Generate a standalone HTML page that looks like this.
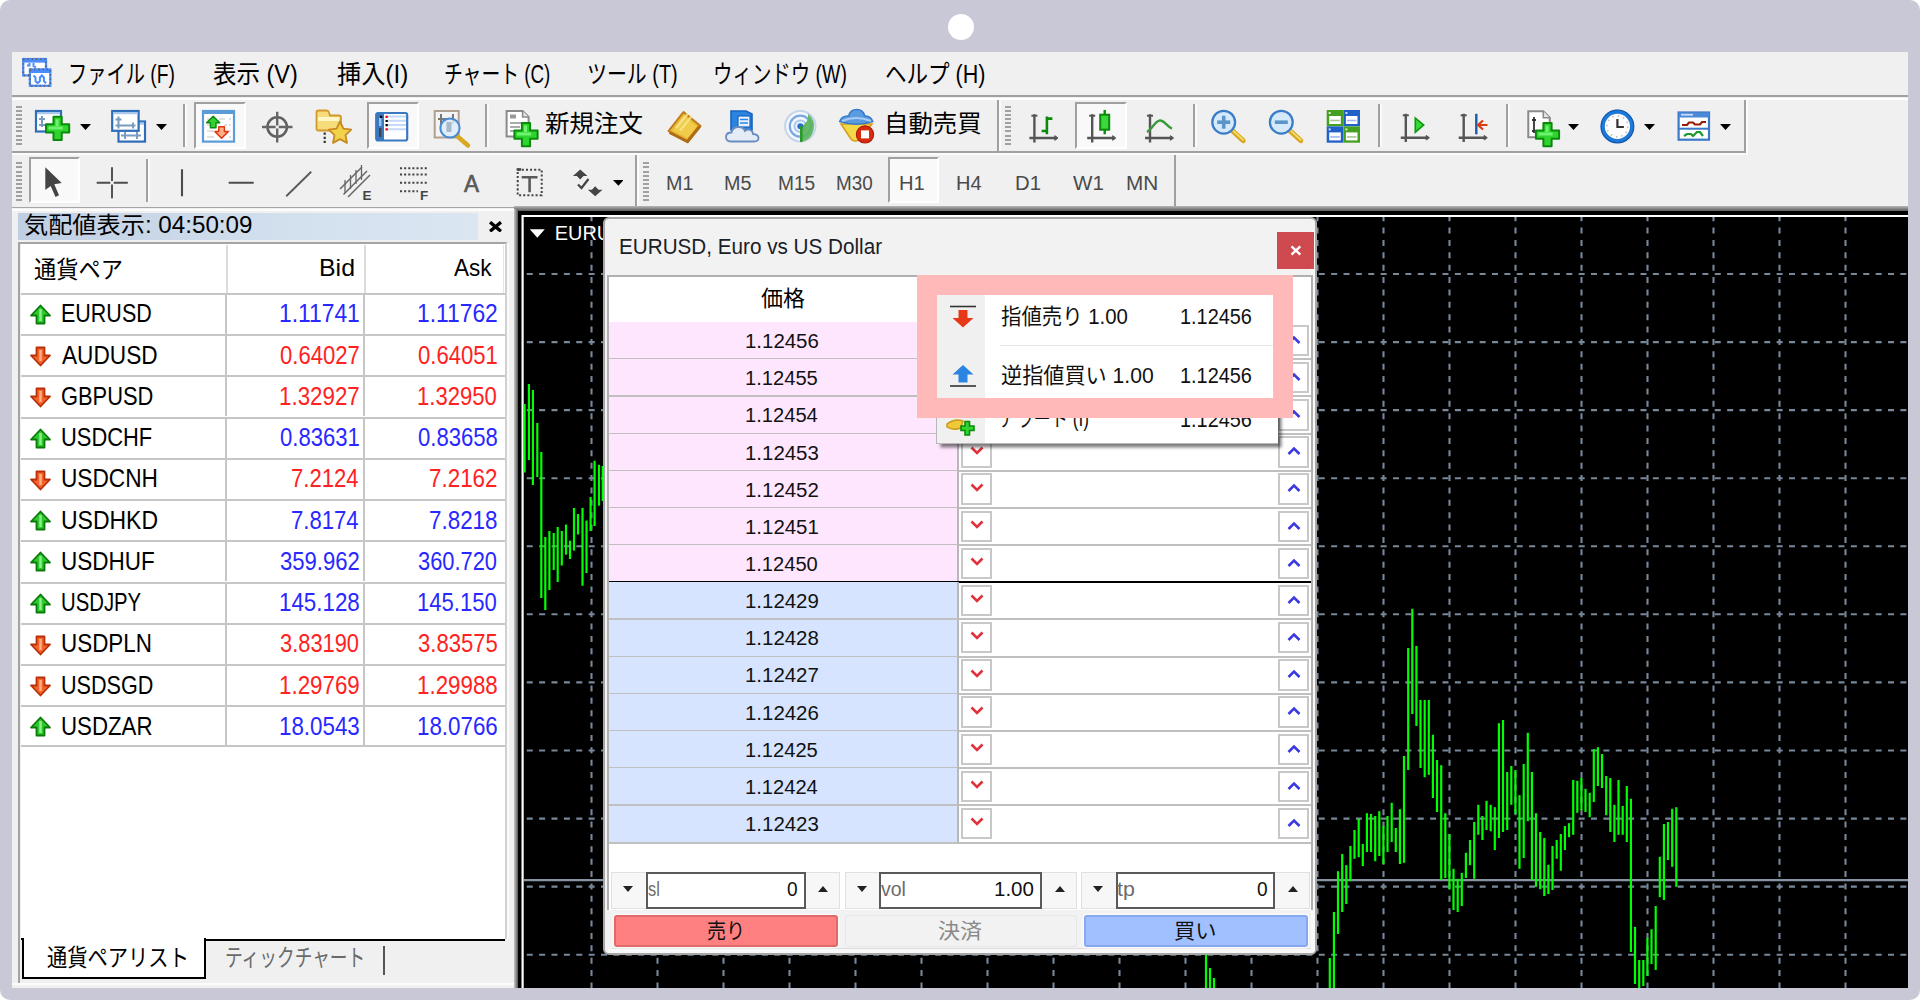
<!DOCTYPE html>
<html lang="ja"><head><meta charset="utf-8"><title>MT4</title>
<style>
html,body{margin:0;padding:0;background:#fff;}
body{width:1920px;height:1000px;position:relative;overflow:hidden;font-family:"Liberation Sans","Noto Sans CJK JP",sans-serif;}
.b{position:absolute;box-sizing:border-box;display:block;}
.t{position:absolute;white-space:nowrap;display:inline-block;}
</style></head><body>
<div class="b " style="left:0.0px;top:0.0px;width:1920.0px;height:1000.0px;background:#c8c8d6;border-radius:10px;"></div>
<div class="b " style="left:947.9px;top:13.8px;width:26.3px;height:26.3px;background:#fff;border-radius:50%;"></div>
<div class="b " style="left:12.0px;top:52.0px;width:1896.0px;height:936.0px;background:#f0f0f0;"></div>
<svg class="b" style="left:20.0px;top:56.0px;" width="34" height="34" viewBox="0 0 34 34">
<rect x="3.200" y="3" width="22.800" height="16.400" fill="#fff" stroke="#4a8cff" stroke-width="2.200"/>
<rect x="3.200" y="3" width="22.800" height="3.600" fill="#4a8cff"/>
<path d="M7 9.500 h2.500 v-2.500 M13.500 7 v3 l2.500 1.500" fill="none" stroke="#4a8cff" stroke-width="2"/>
<rect x="9.900" y="13.400" width="20.400" height="16.400" fill="#fff" stroke="#4a8cff" stroke-width="2.200"/>
<rect x="9.900" y="13.400" width="20.400" height="3.600" fill="#4a8cff"/>
<path d="M13.500 19.500 l2 2 v3.500 l2.200 2.200 l2.200 -2.200 v-3.500 l2 -2 l2 2 v3.500 l2.200 2.200" fill="none" stroke="#4a8cff" stroke-width="2"/>
<path d="M3.200 3 h22.800 v10 M3.200 3 v16.400 h6 M9.900 13.400 h20.400 v16.400 h-20.400 Z" fill="none" stroke="#5a6068" stroke-width="2.200" stroke-dasharray="1.400 2.800" opacity=".8"/>
</svg>
<span class="t" id="t1" style="left:67.72px;top:57.9px;font-size:25.30px;line-height:33px;color:#000;transform-origin:0 50%;transform:scaleX(0.7605);">ファイル (F)</span>
<span class="t" id="t2" style="left:213.00px;top:57.9px;font-size:25.30px;line-height:33px;color:#000;transform-origin:0 50%;transform:scaleX(0.9286);">表示 (V)</span>
<span class="t" id="t3" style="left:337.00px;top:57.9px;font-size:25.30px;line-height:33px;color:#000;transform-origin:0 50%;transform:scaleX(0.9583);">挿入(I)</span>
<span class="t" id="t4" style="left:443.51px;top:57.9px;font-size:25.30px;line-height:33px;color:#000;transform-origin:0 50%;transform:scaleX(0.7433);">チャート (C)</span>
<span class="t" id="t5" style="left:587.43px;top:57.9px;font-size:25.30px;line-height:33px;color:#000;transform-origin:0 50%;transform:scaleX(0.7872);">ツール (T)</span>
<span class="t" id="t6" style="left:713.19px;top:57.9px;font-size:25.30px;line-height:33px;color:#000;transform-origin:0 50%;transform:scaleX(0.7685);">ウィンドウ (W)</span>
<span class="t" id="t7" style="left:885.15px;top:57.9px;font-size:25.30px;line-height:33px;color:#000;transform-origin:0 50%;transform:scaleX(0.8511);">ヘルプ (H)</span>
<div class="b " style="left:12.0px;top:95.0px;width:1896.0px;height:2.0px;background:#a0a0a0;"></div>
<div class="b " style="left:12.0px;top:97.5px;width:1896.0px;height:2.0px;background:#fff;"></div>
<div class="b " style="left:12.0px;top:150.5px;width:1733.0px;height:2.0px;background:#a0a0a0;"></div>
<div class="b " style="left:12.0px;top:153.0px;width:1733.0px;height:2.0px;background:#fbfbfb;"></div>
<div class="b " style="left:996.5px;top:99.5px;width:2.0px;height:52.5px;background:#a0a0a0;"></div>
<div class="b " style="left:998.5px;top:99.5px;width:2.0px;height:51.0px;background:#fbfbfb;"></div>
<div class="b " style="left:1743.5px;top:99.5px;width:2.0px;height:53.0px;background:#a0a0a0;"></div>
<div class="b " style="left:1745.5px;top:99.5px;width:2.0px;height:55.5px;background:#fbfbfb;"></div>
<div class="b " style="left:16.2px;top:105.6px;width:6.2px;height:2.0px;background:#a0a0a0;"></div>
<div class="b " style="left:16.2px;top:109.7px;width:6.2px;height:2.0px;background:#a0a0a0;"></div>
<div class="b " style="left:16.2px;top:113.8px;width:6.2px;height:2.0px;background:#a0a0a0;"></div>
<div class="b " style="left:16.2px;top:118.0px;width:6.2px;height:2.0px;background:#a0a0a0;"></div>
<div class="b " style="left:16.2px;top:122.1px;width:6.2px;height:2.0px;background:#a0a0a0;"></div>
<div class="b " style="left:16.2px;top:126.2px;width:6.2px;height:2.0px;background:#a0a0a0;"></div>
<div class="b " style="left:16.2px;top:130.3px;width:6.2px;height:2.0px;background:#a0a0a0;"></div>
<div class="b " style="left:16.2px;top:134.5px;width:6.2px;height:2.0px;background:#a0a0a0;"></div>
<div class="b " style="left:16.2px;top:138.6px;width:6.2px;height:2.0px;background:#a0a0a0;"></div>
<div class="b " style="left:16.2px;top:142.7px;width:6.2px;height:2.0px;background:#a0a0a0;"></div>
<div class="b " style="left:1004.8px;top:105.6px;width:6.2px;height:2.0px;background:#a0a0a0;"></div>
<div class="b " style="left:1004.8px;top:109.7px;width:6.2px;height:2.0px;background:#a0a0a0;"></div>
<div class="b " style="left:1004.8px;top:113.8px;width:6.2px;height:2.0px;background:#a0a0a0;"></div>
<div class="b " style="left:1004.8px;top:118.0px;width:6.2px;height:2.0px;background:#a0a0a0;"></div>
<div class="b " style="left:1004.8px;top:122.1px;width:6.2px;height:2.0px;background:#a0a0a0;"></div>
<div class="b " style="left:1004.8px;top:126.2px;width:6.2px;height:2.0px;background:#a0a0a0;"></div>
<div class="b " style="left:1004.8px;top:130.3px;width:6.2px;height:2.0px;background:#a0a0a0;"></div>
<div class="b " style="left:1004.8px;top:134.5px;width:6.2px;height:2.0px;background:#a0a0a0;"></div>
<div class="b " style="left:1004.8px;top:138.6px;width:6.2px;height:2.0px;background:#a0a0a0;"></div>
<div class="b " style="left:1004.8px;top:142.7px;width:6.2px;height:2.0px;background:#a0a0a0;"></div>
<div class="b " style="left:12.0px;top:206.5px;width:1896.0px;height:1.8px;background:linear-gradient(180deg,#b4b4b4,#969696);"></div>
<div class="b " style="left:634.7px;top:155.0px;width:2.0px;height:52.0px;background:#a0a0a0;"></div>
<div class="b " style="left:636.7px;top:155.0px;width:2.0px;height:51.0px;background:#fbfbfb;"></div>
<div class="b " style="left:1173.5px;top:155.0px;width:2.0px;height:52.0px;background:#a0a0a0;"></div>
<div class="b " style="left:16.2px;top:162.3px;width:6.2px;height:2.0px;background:#a0a0a0;"></div>
<div class="b " style="left:16.2px;top:166.4px;width:6.2px;height:2.0px;background:#a0a0a0;"></div>
<div class="b " style="left:16.2px;top:170.6px;width:6.2px;height:2.0px;background:#a0a0a0;"></div>
<div class="b " style="left:16.2px;top:174.7px;width:6.2px;height:2.0px;background:#a0a0a0;"></div>
<div class="b " style="left:16.2px;top:178.8px;width:6.2px;height:2.0px;background:#a0a0a0;"></div>
<div class="b " style="left:16.2px;top:182.9px;width:6.2px;height:2.0px;background:#a0a0a0;"></div>
<div class="b " style="left:16.2px;top:187.1px;width:6.2px;height:2.0px;background:#a0a0a0;"></div>
<div class="b " style="left:16.2px;top:191.2px;width:6.2px;height:2.0px;background:#a0a0a0;"></div>
<div class="b " style="left:16.2px;top:195.3px;width:6.2px;height:2.0px;background:#a0a0a0;"></div>
<div class="b " style="left:16.2px;top:199.4px;width:6.2px;height:2.0px;background:#a0a0a0;"></div>
<div class="b " style="left:642.5px;top:162.3px;width:6.2px;height:2.0px;background:#a0a0a0;"></div>
<div class="b " style="left:642.5px;top:166.4px;width:6.2px;height:2.0px;background:#a0a0a0;"></div>
<div class="b " style="left:642.5px;top:170.6px;width:6.2px;height:2.0px;background:#a0a0a0;"></div>
<div class="b " style="left:642.5px;top:174.7px;width:6.2px;height:2.0px;background:#a0a0a0;"></div>
<div class="b " style="left:642.5px;top:178.8px;width:6.2px;height:2.0px;background:#a0a0a0;"></div>
<div class="b " style="left:642.5px;top:182.9px;width:6.2px;height:2.0px;background:#a0a0a0;"></div>
<div class="b " style="left:642.5px;top:187.1px;width:6.2px;height:2.0px;background:#a0a0a0;"></div>
<div class="b " style="left:642.5px;top:191.2px;width:6.2px;height:2.0px;background:#a0a0a0;"></div>
<div class="b " style="left:642.5px;top:195.3px;width:6.2px;height:2.0px;background:#a0a0a0;"></div>
<div class="b " style="left:642.5px;top:199.4px;width:6.2px;height:2.0px;background:#a0a0a0;"></div>
<div class="b " style="left:183.0px;top:104.0px;width:2.0px;height:42.5px;background:#a0a0a0;"></div>
<div class="b " style="left:185.0px;top:104.0px;width:2.0px;height:42.5px;background:#fafafa;"></div>
<div class="b " style="left:485.0px;top:104.0px;width:2.0px;height:42.5px;background:#a0a0a0;"></div>
<div class="b " style="left:487.0px;top:104.0px;width:2.0px;height:42.5px;background:#fafafa;"></div>
<div class="b " style="left:1192.5px;top:104.0px;width:2.0px;height:42.5px;background:#a0a0a0;"></div>
<div class="b " style="left:1194.5px;top:104.0px;width:2.0px;height:42.5px;background:#fafafa;"></div>
<div class="b " style="left:1378.0px;top:104.0px;width:2.0px;height:42.5px;background:#a0a0a0;"></div>
<div class="b " style="left:1380.0px;top:104.0px;width:2.0px;height:42.5px;background:#fafafa;"></div>
<div class="b " style="left:1506.0px;top:104.0px;width:2.0px;height:42.5px;background:#a0a0a0;"></div>
<div class="b " style="left:1508.0px;top:104.0px;width:2.0px;height:42.5px;background:#fafafa;"></div>
<div class="b " style="left:146.0px;top:159.0px;width:2.0px;height:43.0px;background:#a0a0a0;"></div>
<div class="b " style="left:148.0px;top:159.0px;width:2.0px;height:43.0px;background:#fafafa;"></div>
<div class="b " style="left:193.8px;top:101.5px;width:52.7px;height:47.0px;background:#f9f9f9;border-top:2px solid #a0a0a0;border-left:2px solid #a0a0a0;border-right:2px solid #fff;border-bottom:2px solid #fff;"></div>
<div class="b " style="left:367.0px;top:101.5px;width:52.0px;height:47.0px;background:#f9f9f9;border-top:2px solid #a0a0a0;border-left:2px solid #a0a0a0;border-right:2px solid #fff;border-bottom:2px solid #fff;"></div>
<div class="b " style="left:1075.0px;top:101.5px;width:51.5px;height:47.0px;background:#f9f9f9;border-top:2px solid #a0a0a0;border-left:2px solid #a0a0a0;border-right:2px solid #fff;border-bottom:2px solid #fff;"></div>
<div class="b " style="left:28.7px;top:157.3px;width:51.6px;height:45.5px;background:#f9f9f9;border-top:2px solid #a0a0a0;border-left:2px solid #a0a0a0;border-right:2px solid #fff;border-bottom:2px solid #fff;"></div>
<div class="b " style="left:887.5px;top:157.3px;width:51.5px;height:45.5px;background:#f9f9f9;border-top:2px solid #a0a0a0;border-left:2px solid #a0a0a0;border-right:2px solid #fff;border-bottom:2px solid #fff;"></div>
<svg class="b" style="left:79.8px;top:124.2px;" width="11" height="6" viewBox="0 0 11 6"><path d="M0 0 H11 L5.5 6 Z" fill="#000"/></svg>
<svg class="b" style="left:156.2px;top:124.2px;" width="11" height="6" viewBox="0 0 11 6"><path d="M0 0 H11 L5.5 6 Z" fill="#000"/></svg>
<svg class="b" style="left:1567.6px;top:124.2px;" width="11" height="6" viewBox="0 0 11 6"><path d="M0 0 H11 L5.5 6 Z" fill="#000"/></svg>
<svg class="b" style="left:1643.8px;top:124.2px;" width="11" height="6" viewBox="0 0 11 6"><path d="M0 0 H11 L5.5 6 Z" fill="#000"/></svg>
<svg class="b" style="left:1720.3px;top:124.2px;" width="11" height="6" viewBox="0 0 11 6"><path d="M0 0 H11 L5.5 6 Z" fill="#000"/></svg>
<svg class="b" style="left:612.5px;top:180.3px;" width="10.8" height="5.8" viewBox="0 0 10.8 5.8"><path d="M0 0 H10.8 L5.4 5.8 Z" fill="#000"/></svg>
<span class="t" id="t8" style="left:545.00px;top:107.5px;font-size:24.00px;line-height:31px;color:#000;transform-origin:0 50%;transform:scaleX(1.0208);">新規注文</span>
<span class="t" id="t9" style="left:884.15px;top:107.5px;font-size:24.00px;line-height:31px;color:#000;transform-origin:0 50%;transform:scaleX(1.0163);">自動売買</span>
<span class="t" id="t10" style="left:666.39px;top:170.5px;font-size:19.50px;line-height:25px;color:#4a4a4a;transform-origin:0 50%;transform:scaleX(1.0141);">M1</span>
<span class="t" id="t11" style="left:723.99px;top:170.5px;font-size:19.50px;line-height:25px;color:#4a4a4a;transform-origin:0 50%;transform:scaleX(1.0136);">M5</span>
<span class="t" id="t12" style="left:778.02px;top:170.5px;font-size:19.50px;line-height:25px;color:#4a4a4a;transform-origin:0 50%;transform:scaleX(0.9814);">M15</span>
<span class="t" id="t13" style="left:835.63px;top:170.5px;font-size:19.50px;line-height:25px;color:#4a4a4a;transform-origin:0 50%;transform:scaleX(0.9680);">M30</span>
<span class="t" id="t14" style="left:899.36px;top:170.5px;font-size:19.50px;line-height:25px;color:#4a4a4a;transform-origin:0 50%;transform:scaleX(1.0354);">H1</span>
<span class="t" id="t15" style="left:955.67px;top:170.5px;font-size:19.50px;line-height:25px;color:#4a4a4a;transform-origin:0 50%;transform:scaleX(1.0257);">H4</span>
<span class="t" id="t16" style="left:1014.96px;top:170.5px;font-size:19.50px;line-height:25px;color:#4a4a4a;transform-origin:0 50%;transform:scaleX(1.0398);">D1</span>
<span class="t" id="t17" style="left:1072.50px;top:170.5px;font-size:19.50px;line-height:25px;color:#4a4a4a;transform-origin:0 50%;transform:scaleX(1.0562);">W1</span>
<span class="t" id="t18" style="left:1126.44px;top:170.5px;font-size:19.50px;line-height:25px;color:#4a4a4a;transform-origin:0 50%;transform:scaleX(1.0622);">MN</span>
<svg class="b" style="left:0;top:0" width="1920" height="212" viewBox="0 0 1920 212"><rect x="36" y="111" width="25" height="20.5" fill="#fff" stroke="#2e6db8" stroke-width="2.2"/><rect x="37" y="112" width="23" height="2.2" fill="#a9c6ec"/><path d="M42 116 v11 M39 119 h6 M39 125 h6" stroke="#7a9cc0" stroke-width="2" fill="none"/><path d="M53.5 116.8 h8.2 v7.5 h7.5 v8.2 h-7.5 v7.5 h-8.2 v-7.5 h-7.5 v-8.2 h7.5 Z" fill="#2fd42f" stroke="#0a8a0a" stroke-width="2" stroke-linejoin="round"/><path d="M57.1 119.3 v6.6 M48.5 127.9 h14.2" stroke="#7dfa7d" stroke-width="3" fill="none" opacity=".8"/><rect x="118.5" y="121.5" width="26.5" height="20.1" fill="#fff" stroke="#2e6db8" stroke-width="2.2"/><rect x="119.5" y="122.5" width="24.5" height="2.2" fill="#a9c6ec"/><path d="M121 135.5 h20 M125 132 v7 M137 132 v7" stroke="#7a9cc0" stroke-width="2" fill="none"/><rect x="112.2" y="111" width="26.4" height="19.8" fill="#fff" stroke="#2e6db8" stroke-width="2.2"/><rect x="113.2" y="112" width="24.4" height="2.2" fill="#a9c6ec"/><path d="M118.5 116.5 v12 M115.5 119.5 h6 M115.5 125.5 h20 M133 122.5 v6" stroke="#7a9cc0" stroke-width="2" fill="none"/><rect x="203" y="111" width="31" height="30.6" fill="#fff" stroke="#5b9bd8" stroke-width="2.2"/><rect x="203" y="111" width="31" height="3" fill="#5b9bd8"/><path d="M207 119h8M219 119h6M229 119h2M207 125h3M224 125h3M229 125h2M207 131h7M229 131h2M207 137h7M229 137h2" stroke="#d8d8d8" stroke-width="1.6"/><path d="M213.2 116.200 L219.800 122.800 H216 V127.800 H210.400 V122.800 H206.600 Z" fill="#35d035" stroke="#0a8a0a" stroke-width="1.400" stroke-linejoin="round"/><path d="M221.600 138.200 L228.200 131.600 H224.400 V126.800 H218.800 V131.600 H215 Z" fill="#ffb088" stroke="#e03810" stroke-width="1.500" stroke-linejoin="round"/><circle cx="277.2" cy="127" r="9.700" fill="none" stroke="#606060" stroke-width="2.600"/><path d="M262 127 h13.600 M278.800 127 h13.700 M277.2 111.8 v13.600 M277.2 128.600 v13.800" stroke="#666" stroke-width="2.4"/><path d="M316.5 112.5 q0 -2 2 -2 h8 q2 0 2.5 2 l1 3 h9 q2 0 2 2 v11 q0 2 -2 2 h-20.5 q-2 0 -2 -2 Z" fill="#f6dc7a" stroke="#d29a2a" stroke-width="1.8"/><rect x="318" y="117" width="21" height="4" fill="#fff7c8"/><path d="M340 121.5 l3.4 7.2 7.8 1 -5.7 5.4 1.5 7.8 -7 -3.8 -7 3.8 1.5 -7.8 -5.7 -5.4 7.8 -1 Z" fill="#f2d24a" stroke="#c68a1e" stroke-width="1.8" stroke-linejoin="round"/><path d="M324.7 132.5 v2.2 M324.7 136.7 v2.2 M324.7 140.7 v2.2" stroke="#333" stroke-width="2.2"/><rect x="376.2" y="113" width="31" height="27.5" rx="2" fill="#fff" stroke="#3a78c0" stroke-width="2.2"/><rect x="376" y="113" width="8" height="27.5" fill="#3a78c0"/><rect x="379" y="128" width="2.4" height="9" fill="#444"/><rect x="379" y="116" width="2.4" height="10" fill="#9cc4f0"/><path d="M385 116.5h21M385 120.8h21M385 125h21M385 129.2h21" stroke="#c4d8f8" stroke-width="2"/><path d="M379.6 116.8h2.6M385.6 121h2.2M385.6 125.2h2.2" stroke="#000" stroke-width="2.2"/><path d="M385.6 116.8h2.2M385.6 129.4h2.2" stroke="#f00" stroke-width="2.2"/><rect x="434.7" y="111" width="24" height="26.5" fill="#f4f4f4" stroke="#b0a090" stroke-width="2"/><path d="M441 114 v14 M438 119 h10 M453 114 v10" stroke="#777" stroke-width="2" fill="none"/><path d="M457 136 l11 9.5" stroke="#d8a820" stroke-width="4.4" stroke-linecap="round"/><circle cx="450" cy="128" r="9.6" fill="#dcecfa" fill-opacity=".85" stroke="#4a8ad0" stroke-width="2"/><rect x="446.5" y="122" width="5" height="10" fill="#9ab" opacity=".8"/><path d="M506.6 111 h16 l6 6 v19.5 h-22 Z" fill="#fff" stroke="#8a8a8a" stroke-width="2"/><path d="M522.6 111 v6 h6" fill="#e8e8e8" stroke="#8a8a8a" stroke-width="1.6"/><rect x="510" y="114.5" width="6" height="4" fill="#999"/><path d="M510 123h13M510 127h10M510 131h6" stroke="#aaa" stroke-width="2"/><path d="M521.9 123 h8.2 v7.5 h7.5 v8.2 h-7.5 v7.5 h-8.2 v-7.5 h-7.5 v-8.2 h7.5 Z" fill="#2fd42f" stroke="#0a8a0a" stroke-width="2" stroke-linejoin="round"/><path d="M525.5 125.5 v6.6 M516.9 134.1 h14.2" stroke="#7dfa7d" stroke-width="3" fill="none" opacity=".8"/><path d="M668.5 131 l15 -19 17 14 -13 16 Z" fill="#e8b838" stroke="#c07a18" stroke-width="2" stroke-linejoin="round"/><path d="M683.500 115.500 l13.500 11 -9.500 11.500 -14.500 -7.500 Z" fill="#f0cc48"/><path d="M676 128 l12 -14.500 M680 130.500 l12 -14.500" stroke="#f8e890" stroke-width="2.400" opacity=".8"/><path d="M669.5 132.5 l18 9 12 -15" fill="none" stroke="#b06c14" stroke-width="3"/><path d="M731 111 h15 l6 3 v16 h-21 Z" fill="#2a84e0" stroke="#1a64c0" stroke-width="1.6"/><rect x="738" y="116" width="12" height="11" fill="#e8f2ff" stroke="#1a64c0" stroke-width="1.2"/><path d="M740 119.5h8M740 123h8" stroke="#2a84e0" stroke-width="1.6"/><path d="M731 141.5 q-5 0 -5 -4.5 q0 -4.500 5.500 -4.500 q1 -5.500 7 -5.500 q5 0 6.500 4 q2 -2 5 -1 q3 1 3 4 q5.500 0.500 5.500 4 q0 3.500 -4.500 3.500 Z" fill="#e4ecf6" stroke="#6a8cc0" stroke-width="1.8"/><circle cx="800.3" cy="126.2" r="15.2" fill="#f4f8fc" stroke="#c4d4ea" stroke-width="2"/><circle cx="800.3" cy="126.2" r="10.5" fill="none" stroke="#7aa8e0" stroke-width="2.2"/><circle cx="800.3" cy="126.2" r="5.800" fill="none" stroke="#a8c8f0" stroke-width="2"/><path d="M802 141.8 v-16 a12 12 0 0 0 6 -12 a16 16 0 0 1 -6 28 Z" fill="#58b458" opacity=".9"/><circle cx="800.3" cy="126.2" r="3" fill="#2a6cd0"/><rect x="800" y="126" width="2.6" height="16" fill="#2a9a2a"/><path d="M841 124 l10 15 q3 3.500 8 1 l13 -16 Z" fill="#f4d848" stroke="#d4a020" stroke-width="1.6"/><path d="M839.700 121.500 q2 -6 9 -5.500 q1.500 -6.500 8 -6.500 q6.500 0 8 6.500 q6 -0.500 8 5.500 q-16 5.500 -33 0 Z" fill="#5a9ce0" stroke="#3a78c8" stroke-width="1.6"/><path d="M842 121 q14 -6 29 0" stroke="#a8ccf4" stroke-width="2" fill="none"/><circle cx="865" cy="134.4" r="8.6" fill="#d82c10" stroke="#b01c08" stroke-width="1.2"/><rect x="861" y="130.400" width="8" height="8" fill="#fff"/><path d="M1034.4 114.2 V142.4 M1029.4 138 H1056.8" stroke="#555" stroke-width="2.4" fill="none"/><path d="M1031.4 115.7 h6" stroke="#555" stroke-width="2" fill="none"/><path d="M1054.8 135.7 l3.200 2.300 -3.200 2.300 Z" stroke="#555" stroke-width="1" fill="#555"/><path d="M1046.9 116.5 V134.3 M1046.9 118.6 h5.5 M1041.6 131 h5.3" stroke="#0a8a0a" stroke-width="2.6" fill="none"/><path d="M1092.2 114.2 V142.4 M1087.2 138 H1114.6" stroke="#555" stroke-width="2.4" fill="none"/><path d="M1089.2 115.7 h6" stroke="#555" stroke-width="2" fill="none"/><path d="M1112.6 135.7 l3.200 2.300 -3.200 2.300 Z" stroke="#555" stroke-width="1" fill="#555"/><path d="M1104.7 109.900 V134.3" stroke="#0a8a0a" stroke-width="2.4"/><rect x="1100.2" y="114.700" width="9" height="15" fill="#3ad83a" stroke="#0a8a0a" stroke-width="2"/><path d="M1150 114.2 V142.4 M1145 138 H1172.4" stroke="#555" stroke-width="2.4" fill="none"/><path d="M1147 115.7 h6" stroke="#555" stroke-width="2" fill="none"/><path d="M1170.4 135.7 l3.200 2.300 -3.200 2.300 Z" stroke="#555" stroke-width="1" fill="#555"/><path d="M1146.9 131.8 C1152 130 1155 120.5 1160 120.5 S1167 127 1172 128.600" stroke="#3a9a3a" stroke-width="2.4" fill="none"/><path d="M1232.2 130.7 l11 10" stroke="#d8a820" stroke-width="5" stroke-linecap="round"/><path d="M1232.2 129.9 l11 10" stroke="#f8e070" stroke-width="1.6" stroke-linecap="round"/><circle cx="1223.7" cy="122.2" r="11.4" fill="#d4eafa" stroke="#3a7cc8" stroke-width="2.2"/><path d="M1217.2 122.2 h13" stroke="#5a94c8" stroke-width="3.6"/><path d="M1223.7 115.7 v13" stroke="#5a94c8" stroke-width="3.6"/><path d="M1289.8 130.7 l11 10" stroke="#d8a820" stroke-width="5" stroke-linecap="round"/><path d="M1289.8 129.9 l11 10" stroke="#f8e070" stroke-width="1.6" stroke-linecap="round"/><circle cx="1281.3" cy="122.2" r="11.4" fill="#d4eafa" stroke="#3a7cc8" stroke-width="2.2"/><path d="M1274.8 122.2 h13" stroke="#5a94c8" stroke-width="3.6"/><rect x="1326.7" y="110" width="16.6" height="16.3" fill="#46a020"/><rect x="1329.2" y="116" width="11.6" height="8" fill="#fff"/><path d="M1330.2 120.5 h9.6" stroke="#a8c890" stroke-width="1.6"/><rect x="1328.7" y="112" width="2" height="2" fill="#fff" opacity=".8"/><rect x="1343.4" y="110" width="16.6" height="16.3" fill="#2060c8"/><rect x="1345.9" y="116" width="11.6" height="8" fill="#fff"/><path d="M1346.9 120.5 h9.6" stroke="#a0b8f0" stroke-width="1.6"/><rect x="1345.4" y="112" width="2" height="2" fill="#fff" opacity=".8"/><rect x="1326.7" y="126.4" width="16.6" height="16.3" fill="#2060c8"/><rect x="1329.2" y="132.4" width="11.6" height="8" fill="#fff"/><path d="M1330.2 136.9 h9.6" stroke="#a0b8f0" stroke-width="1.6"/><rect x="1328.7" y="128.4" width="2" height="2" fill="#fff" opacity=".8"/><rect x="1343.4" y="126.4" width="16.6" height="16.3" fill="#46a020"/><rect x="1345.9" y="132.4" width="11.6" height="8" fill="#fff"/><path d="M1346.9 136.9 h9.6" stroke="#a8c890" stroke-width="1.6"/><rect x="1345.4" y="128.4" width="2" height="2" fill="#fff" opacity=".8"/><path d="M1405.8 113.8 V142.1 M1400.8 137.7 H1428.2" stroke="#555" stroke-width="2.4" fill="none"/><path d="M1402.8 115.3 h6" stroke="#555" stroke-width="2" fill="none"/><path d="M1426.2 135.4 l3.200 2.300 -3.200 2.300 Z" stroke="#555" stroke-width="1" fill="#555"/><path d="M1415.3 118 l8.400 7.100 -8.400 7.100 Z" fill="#3ad83a" stroke="#0a9a0a" stroke-width="1.6"/><path d="M1463.7 113.8 V142.1 M1458.7 137.7 H1486.1" stroke="#555" stroke-width="2.4" fill="none"/><path d="M1460.7 115.3 h6" stroke="#555" stroke-width="2" fill="none"/><path d="M1484.1 135.4 l3.200 2.300 -3.200 2.300 Z" stroke="#555" stroke-width="1" fill="#555"/><path d="M1476.3 113.8 V134.3" stroke="#1a5ca8" stroke-width="2.4"/><path d="M1487.5 125 h-9 M1483 120.500 l-5 4.500 5 4.500" stroke="#d83c10" stroke-width="2.200" fill="none"/><path d="M1528.3 111.2 h15 l6.500 6.500 v19.500 h-21.500 Z" fill="#fff" stroke="#8a8a8a" stroke-width="2"/><path d="M1543.3 111.2 v6.500 h6.500" fill="#e8e8e8" stroke="#8a8a8a" stroke-width="1.6"/><path d="M1534 117 v16 M1532 120 h4 M1532 131 h4" stroke="#333" stroke-width="1.800"/><path d="M1543.4 123 h8.2 v7.5 h7.5 v8.2 h-7.5 v7.5 h-8.2 v-7.5 h-7.5 v-8.2 h7.5 Z" fill="#2fd42f" stroke="#0a8a0a" stroke-width="2" stroke-linejoin="round"/><path d="M1547 125.5 v6.6 M1538.4 134.1 h14.2" stroke="#7dfa7d" stroke-width="3" fill="none" opacity=".8"/><circle cx="1617.4" cy="126.4" r="14.6" fill="#fdfdfd" stroke="#1e78d8" stroke-width="4"/><circle cx="1617.4" cy="126.4" r="16.400" fill="none" stroke="#1458b0" stroke-width="1.2"/><path d="M1617.4 119 v8 h6.500" stroke="#333" stroke-width="2.200" fill="none"/><circle cx="1617.4" cy="126.4" r="10.500" fill="none" stroke="#bbb" stroke-width="1.600" stroke-dasharray="1.400 4.100"/><rect x="1678.6" y="112.500" width="30.400" height="27.200" fill="#fff" stroke="#3a78c8" stroke-width="2.200"/><rect x="1678.6" y="112.500" width="30.400" height="5" fill="#4a88d8"/><rect x="1681" y="113.800" width="12" height="1.800" fill="#c8dcf8"/><path d="M1678.6 128.700 h30.400" stroke="#3a78c8" stroke-width="2"/><path d="M1682 125 h5 l2 -2.500 h4 l2 2 h5 l2 -2.500 h4" stroke="#9a1c08" stroke-width="2.200" fill="none"/><path d="M1684 136 l3 -2 h4 l2 2 4 -4 h3 l3 4" stroke="#1a9a2a" stroke-width="2.200" fill="none"/><path d="M45.3 167.3 V190 L50.700 186 L55.500 197 L59 195.300 L54.300 184.200 L61.700 183 Z" fill="#444"/><path d="M96.7 182.800 H110.300 M113.700 182.800 H127.800 M112 167.300 V181.100 M112 184.500 V198.300" stroke="#4c4c4c" stroke-width="1.900"/><path d="M182 169.200 V196.200 M228.700 182.800 H253.700" stroke="#4c4c4c" stroke-width="2.100"/><path d="M286.200 196.200 L311.200 171.700" stroke="#5a5a5a" stroke-width="1.900"/><path d="M340 189 L362 167 M343.500 194.500 L367 171 M348 197 L370 175" stroke="#666" stroke-width="1.500"/><path d="M345 180 v13 M350.500 175 v14 M356 170 v14 M361.500 165 v15" stroke="#666" stroke-width="1.300"/><text x="362.600" y="200.300" font-family="Liberation Sans,sans-serif" font-weight="bold" font-size="13.500" fill="#444">E</text><path d="M400 168.2 H427" stroke="#444" stroke-width="2" stroke-dasharray="2.060 2.060"/><path d="M400 174.5 H427" stroke="#444" stroke-width="2" stroke-dasharray="2.060 2.060"/><path d="M400 182.8 H427" stroke="#444" stroke-width="2" stroke-dasharray="2.060 2.060"/><path d="M400 191.2 H418" stroke="#444" stroke-width="2" stroke-dasharray="2.060 2.060"/><text x="420" y="200.300" font-family="Liberation Sans,sans-serif" font-weight="bold" font-size="13.500" fill="#444">F</text><text x="463.900" y="191.800" font-family="Liberation Sans,sans-serif" font-size="24.200" fill="#5a5a5a" stroke="#5a5a5a" stroke-width=".7" textLength="15" lengthAdjust="spacingAndGlyphs">A</text><rect x="517.700" y="169.700" width="24" height="25.500" fill="none" stroke="#444" stroke-width="2" stroke-dasharray="2.060 2.060"/><rect x="516.700" y="168.200" width="4.500" height="2.500" fill="#444"/><path d="M521.700 177.300 H537.500 M529.600 177.300 V192.200" stroke="#5a5a5a" stroke-width="2.600"/><path d="M580.200 169.500 l7.300 6.500 h-4 l-3.300 3.500 -3.300 -3.500 h-4 Z" fill="#444"/><path d="M595.200 196.200 l7.300 -6.500 h-4 l-3.300 -3.500 -3.300 3.500 h-4 Z" fill="#444"/><path d="M578 184.500 l3.500 3.500 7 -9" stroke="#444" stroke-width="2.200" fill="none"/></svg>
<div class="b " style="left:12.0px;top:208.0px;width:502.0px;height:780.0px;background:#f0f0f0;"></div>
<div class="b " style="left:12.0px;top:209.0px;width:501.5px;height:2.0px;background:#fcfcfc;"></div>
<div class="b " style="left:18.3px;top:242.2px;width:1.9px;height:740.8px;background:#a4a4a4;"></div>
<div class="b " style="left:18.0px;top:212.9px;width:460.0px;height:26.9px;background:linear-gradient(90deg,#bfcfe3 0%,#d3e0ee 60%,#dbe6f2 100%);"></div>
<span class="t" id="t19" style="left:24.40px;top:210.0px;font-size:23.00px;line-height:30px;color:#000;transform-origin:0 50%;transform:scaleX(1.0512);">気配値表示: 04:50:09</span>
<svg class="b" style="left:488.5px;top:220.8px;" width="13" height="11.5" viewBox="0 0 13 11.5"><path d="M1 1.200 L12 10.300 M12 1.200 L1 10.300" stroke="#000" stroke-width="3.400" stroke-linecap="butt"/></svg>
<div class="b " style="left:20.5px;top:242.0px;width:486.5px;height:697.0px;background:#fff;"></div>
<div class="b " style="left:18.3px;top:242.2px;width:488.7px;height:1.8px;background:#a4a4a4;"></div>
<div class="b " style="left:507.2px;top:244.0px;width:1.6px;height:695.0px;background:#fbfbfb;"></div>
<div class="b " style="left:505.0px;top:243.0px;width:2.0px;height:696.0px;background:#d0d0d0;"></div>
<div class="b " style="left:20.5px;top:292.5px;width:484.5px;height:2.0px;background:#c6c6c6;"></div>
<div class="b " style="left:226.0px;top:245.0px;width:2.0px;height:47.5px;background:#dcdcdc;"></div>
<div class="b " style="left:364.0px;top:245.0px;width:2.0px;height:47.5px;background:#dcdcdc;"></div>
<div class="b " style="left:502.5px;top:245.0px;width:1.5px;height:47.5px;background:#e4e4e4;"></div>
<span class="t" id="t20" style="left:33.90px;top:253.7px;font-size:24.00px;line-height:31px;color:#000;transform-origin:0 50%;transform:scaleX(0.9263);">通貨ペア</span>
<span class="t" id="t21" style="left:318.97px;top:251.7px;font-size:24.50px;line-height:32px;color:#000;transform-origin:0 50%;transform:scaleX(1.0157);">Bid</span>
<span class="t" id="t22" style="left:454.20px;top:251.7px;font-size:24.50px;line-height:32px;color:#000;transform-origin:0 50%;transform:scaleX(0.9185);">Ask</span>
<div class="b " style="left:20.5px;top:334.1px;width:484.5px;height:2.0px;background:#c6c6c6;"></div>
<div class="b " style="left:224.5px;top:294.8px;width:2.0px;height:39.2px;background:#c6c6c6;"></div>
<div class="b " style="left:363.0px;top:294.8px;width:2.0px;height:39.2px;background:#c6c6c6;"></div>
<span class="t" id="t23" style="left:60.59px;top:297.4px;font-size:25.20px;line-height:33px;color:#000;transform-origin:0 50%;transform:scaleX(0.8530);">EURUSD</span>
<span class="t" id="t24" style="left:278.69px;top:297.4px;font-size:25.20px;line-height:33px;color:#2828ff;transform-origin:0 50%;transform:scaleX(0.9063);">1.11741</span>
<span class="t" id="t25" style="left:417.09px;top:297.4px;font-size:25.20px;line-height:33px;color:#2828ff;transform-origin:0 50%;transform:scaleX(0.9063);">1.11762</span>
<svg class="b" style="left:29.0px;top:303.9px;" width="23" height="22" viewBox="0 0 23 22"><path d="M11.500 1.500 L21 11.500 H15.500 V19.500 H7.500 V11.500 H2 Z" fill="#2fc82f" stroke="#0a7a0a" stroke-width="1.800" stroke-linejoin="round"/><path d="M11.500 5 V17" stroke="#8af08a" stroke-width="2.500"/></svg>
<div class="b " style="left:20.5px;top:375.3px;width:484.5px;height:2.0px;background:#c6c6c6;"></div>
<div class="b " style="left:224.5px;top:336.1px;width:2.0px;height:39.2px;background:#c6c6c6;"></div>
<div class="b " style="left:363.0px;top:336.1px;width:2.0px;height:39.2px;background:#c6c6c6;"></div>
<span class="t" id="t26" style="left:62.30px;top:338.7px;font-size:25.20px;line-height:33px;color:#000;transform-origin:0 50%;transform:scaleX(0.8986);">AUDUSD</span>
<span class="t" id="t27" style="left:279.60px;top:338.7px;font-size:25.20px;line-height:33px;color:#ff2222;transform-origin:0 50%;transform:scaleX(0.8774);">0.64027</span>
<span class="t" id="t28" style="left:418.00px;top:338.7px;font-size:25.20px;line-height:33px;color:#ff2222;transform-origin:0 50%;transform:scaleX(0.8774);">0.64051</span>
<svg class="b" style="left:29.0px;top:345.2px;" width="23" height="22" viewBox="0 0 23 22"><path d="M11.500 20.500 L21 10.500 H15.500 V2.500 H7.500 V10.500 H2 Z" fill="#f4642a" stroke="#b8300a" stroke-width="1.800" stroke-linejoin="round"/><path d="M11.500 5 V16" stroke="#ffb088" stroke-width="2.500"/></svg>
<div class="b " style="left:20.5px;top:416.6px;width:484.5px;height:2.0px;background:#c6c6c6;"></div>
<div class="b " style="left:224.5px;top:377.3px;width:2.0px;height:39.2px;background:#c6c6c6;"></div>
<div class="b " style="left:363.0px;top:377.3px;width:2.0px;height:39.2px;background:#c6c6c6;"></div>
<span class="t" id="t29" style="left:61.43px;top:379.9px;font-size:25.20px;line-height:33px;color:#000;transform-origin:0 50%;transform:scaleX(0.8687);">GBPUSD</span>
<span class="t" id="t30" style="left:278.71px;top:379.9px;font-size:25.20px;line-height:33px;color:#ff2222;transform-origin:0 50%;transform:scaleX(0.8873);">1.32927</span>
<span class="t" id="t31" style="left:417.12px;top:379.9px;font-size:25.20px;line-height:33px;color:#ff2222;transform-origin:0 50%;transform:scaleX(0.8774);">1.32950</span>
<svg class="b" style="left:29.0px;top:386.4px;" width="23" height="22" viewBox="0 0 23 22"><path d="M11.500 20.500 L21 10.500 H15.500 V2.500 H7.500 V10.500 H2 Z" fill="#f4642a" stroke="#b8300a" stroke-width="1.800" stroke-linejoin="round"/><path d="M11.500 5 V16" stroke="#ffb088" stroke-width="2.500"/></svg>
<div class="b " style="left:20.5px;top:457.8px;width:484.5px;height:2.0px;background:#c6c6c6;"></div>
<div class="b " style="left:224.5px;top:418.6px;width:2.0px;height:39.2px;background:#c6c6c6;"></div>
<div class="b " style="left:363.0px;top:418.6px;width:2.0px;height:39.2px;background:#c6c6c6;"></div>
<span class="t" id="t32" style="left:61.43px;top:421.2px;font-size:25.20px;line-height:33px;color:#000;transform-origin:0 50%;transform:scaleX(0.8691);">USDCHF</span>
<span class="t" id="t33" style="left:279.60px;top:421.2px;font-size:25.20px;line-height:33px;color:#2828ff;transform-origin:0 50%;transform:scaleX(0.8774);">0.83631</span>
<span class="t" id="t34" style="left:418.00px;top:421.2px;font-size:25.20px;line-height:33px;color:#2828ff;transform-origin:0 50%;transform:scaleX(0.8774);">0.83658</span>
<svg class="b" style="left:29.0px;top:427.7px;" width="23" height="22" viewBox="0 0 23 22"><path d="M11.500 1.500 L21 11.500 H15.500 V19.500 H7.500 V11.500 H2 Z" fill="#2fc82f" stroke="#0a7a0a" stroke-width="1.800" stroke-linejoin="round"/><path d="M11.500 5 V17" stroke="#8af08a" stroke-width="2.500"/></svg>
<div class="b " style="left:20.5px;top:499.1px;width:484.5px;height:2.0px;background:#c6c6c6;"></div>
<div class="b " style="left:224.5px;top:459.8px;width:2.0px;height:39.2px;background:#c6c6c6;"></div>
<div class="b " style="left:363.0px;top:459.8px;width:2.0px;height:39.2px;background:#c6c6c6;"></div>
<span class="t" id="t35" style="left:61.40px;top:462.4px;font-size:25.20px;line-height:33px;color:#000;transform-origin:0 50%;transform:scaleX(0.9000);">USDCNH</span>
<span class="t" id="t36" style="left:290.97px;top:462.4px;font-size:25.20px;line-height:33px;color:#ff2222;transform-origin:0 50%;transform:scaleX(0.8779);">7.2124</span>
<span class="t" id="t37" style="left:429.36px;top:462.4px;font-size:25.20px;line-height:33px;color:#ff2222;transform-origin:0 50%;transform:scaleX(0.8896);">7.2162</span>
<svg class="b" style="left:29.0px;top:468.9px;" width="23" height="22" viewBox="0 0 23 22"><path d="M11.500 20.500 L21 10.500 H15.500 V2.500 H7.500 V10.500 H2 Z" fill="#f4642a" stroke="#b8300a" stroke-width="1.800" stroke-linejoin="round"/><path d="M11.500 5 V16" stroke="#ffb088" stroke-width="2.500"/></svg>
<div class="b " style="left:20.5px;top:540.3px;width:484.5px;height:2.0px;background:#c6c6c6;"></div>
<div class="b " style="left:224.5px;top:501.1px;width:2.0px;height:39.2px;background:#c6c6c6;"></div>
<div class="b " style="left:363.0px;top:501.1px;width:2.0px;height:39.2px;background:#c6c6c6;"></div>
<span class="t" id="t38" style="left:61.39px;top:503.7px;font-size:25.20px;line-height:33px;color:#000;transform-origin:0 50%;transform:scaleX(0.9120);">USDHKD</span>
<span class="t" id="t39" style="left:290.97px;top:503.7px;font-size:25.20px;line-height:33px;color:#2828ff;transform-origin:0 50%;transform:scaleX(0.8779);">7.8174</span>
<span class="t" id="t40" style="left:429.36px;top:503.7px;font-size:25.20px;line-height:33px;color:#2828ff;transform-origin:0 50%;transform:scaleX(0.8896);">7.8218</span>
<svg class="b" style="left:29.0px;top:510.2px;" width="23" height="22" viewBox="0 0 23 22"><path d="M11.500 1.500 L21 11.500 H15.500 V19.500 H7.500 V11.500 H2 Z" fill="#2fc82f" stroke="#0a7a0a" stroke-width="1.800" stroke-linejoin="round"/><path d="M11.500 5 V17" stroke="#8af08a" stroke-width="2.500"/></svg>
<div class="b " style="left:20.5px;top:581.5px;width:484.5px;height:2.0px;background:#c6c6c6;"></div>
<div class="b " style="left:224.5px;top:542.3px;width:2.0px;height:39.2px;background:#c6c6c6;"></div>
<div class="b " style="left:363.0px;top:542.3px;width:2.0px;height:39.2px;background:#c6c6c6;"></div>
<span class="t" id="t41" style="left:61.41px;top:544.9px;font-size:25.20px;line-height:33px;color:#000;transform-origin:0 50%;transform:scaleX(0.8932);">USDHUF</span>
<span class="t" id="t42" style="left:279.60px;top:544.9px;font-size:25.20px;line-height:33px;color:#2828ff;transform-origin:0 50%;transform:scaleX(0.8774);">359.962</span>
<span class="t" id="t43" style="left:418.00px;top:544.9px;font-size:25.20px;line-height:33px;color:#2828ff;transform-origin:0 50%;transform:scaleX(0.8678);">360.720</span>
<svg class="b" style="left:29.0px;top:551.4px;" width="23" height="22" viewBox="0 0 23 22"><path d="M11.500 1.500 L21 11.500 H15.500 V19.500 H7.500 V11.500 H2 Z" fill="#2fc82f" stroke="#0a7a0a" stroke-width="1.800" stroke-linejoin="round"/><path d="M11.500 5 V17" stroke="#8af08a" stroke-width="2.500"/></svg>
<div class="b " style="left:20.5px;top:622.8px;width:484.5px;height:2.0px;background:#c6c6c6;"></div>
<div class="b " style="left:224.5px;top:583.5px;width:2.0px;height:39.2px;background:#c6c6c6;"></div>
<div class="b " style="left:363.0px;top:583.5px;width:2.0px;height:39.2px;background:#c6c6c6;"></div>
<span class="t" id="t44" style="left:61.49px;top:586.2px;font-size:25.20px;line-height:33px;color:#000;transform-origin:0 50%;transform:scaleX(0.8065);">USDJPY</span>
<span class="t" id="t45" style="left:278.71px;top:586.2px;font-size:25.20px;line-height:33px;color:#2828ff;transform-origin:0 50%;transform:scaleX(0.8873);">145.128</span>
<span class="t" id="t46" style="left:417.12px;top:586.2px;font-size:25.20px;line-height:33px;color:#2828ff;transform-origin:0 50%;transform:scaleX(0.8774);">145.150</span>
<svg class="b" style="left:29.0px;top:592.7px;" width="23" height="22" viewBox="0 0 23 22"><path d="M11.500 1.500 L21 11.500 H15.500 V19.500 H7.500 V11.500 H2 Z" fill="#2fc82f" stroke="#0a7a0a" stroke-width="1.800" stroke-linejoin="round"/><path d="M11.500 5 V17" stroke="#8af08a" stroke-width="2.500"/></svg>
<div class="b " style="left:20.5px;top:664.0px;width:484.5px;height:2.0px;background:#c6c6c6;"></div>
<div class="b " style="left:224.5px;top:624.8px;width:2.0px;height:39.2px;background:#c6c6c6;"></div>
<div class="b " style="left:363.0px;top:624.8px;width:2.0px;height:39.2px;background:#c6c6c6;"></div>
<span class="t" id="t47" style="left:61.41px;top:627.4px;font-size:25.20px;line-height:33px;color:#000;transform-origin:0 50%;transform:scaleX(0.8901);">USDPLN</span>
<span class="t" id="t48" style="left:279.60px;top:627.4px;font-size:25.20px;line-height:33px;color:#ff2222;transform-origin:0 50%;transform:scaleX(0.8678);">3.83190</span>
<span class="t" id="t49" style="left:418.00px;top:627.4px;font-size:25.20px;line-height:33px;color:#ff2222;transform-origin:0 50%;transform:scaleX(0.8774);">3.83575</span>
<svg class="b" style="left:29.0px;top:633.9px;" width="23" height="22" viewBox="0 0 23 22"><path d="M11.500 20.500 L21 10.500 H15.500 V2.500 H7.500 V10.500 H2 Z" fill="#f4642a" stroke="#b8300a" stroke-width="1.800" stroke-linejoin="round"/><path d="M11.500 5 V16" stroke="#ffb088" stroke-width="2.500"/></svg>
<div class="b " style="left:20.5px;top:705.3px;width:484.5px;height:2.0px;background:#c6c6c6;"></div>
<div class="b " style="left:224.5px;top:666.0px;width:2.0px;height:39.2px;background:#c6c6c6;"></div>
<div class="b " style="left:363.0px;top:666.0px;width:2.0px;height:39.2px;background:#c6c6c6;"></div>
<span class="t" id="t50" style="left:61.44px;top:668.7px;font-size:25.20px;line-height:33px;color:#000;transform-origin:0 50%;transform:scaleX(0.8572);">USDSGD</span>
<span class="t" id="t51" style="left:278.71px;top:668.7px;font-size:25.20px;line-height:33px;color:#ff2222;transform-origin:0 50%;transform:scaleX(0.8873);">1.29769</span>
<span class="t" id="t52" style="left:417.11px;top:668.7px;font-size:25.20px;line-height:33px;color:#ff2222;transform-origin:0 50%;transform:scaleX(0.8873);">1.29988</span>
<svg class="b" style="left:29.0px;top:675.2px;" width="23" height="22" viewBox="0 0 23 22"><path d="M11.500 20.500 L21 10.500 H15.500 V2.500 H7.500 V10.500 H2 Z" fill="#f4642a" stroke="#b8300a" stroke-width="1.800" stroke-linejoin="round"/><path d="M11.500 5 V16" stroke="#ffb088" stroke-width="2.500"/></svg>
<div class="b " style="left:20.5px;top:745.1px;width:484.5px;height:2.0px;background:#c6c6c6;"></div>
<div class="b " style="left:224.5px;top:707.3px;width:2.0px;height:37.8px;background:#c6c6c6;"></div>
<div class="b " style="left:363.0px;top:707.3px;width:2.0px;height:37.8px;background:#c6c6c6;"></div>
<span class="t" id="t53" style="left:61.42px;top:709.9px;font-size:25.20px;line-height:33px;color:#000;transform-origin:0 50%;transform:scaleX(0.8841);">USDZAR</span>
<span class="t" id="t54" style="left:278.71px;top:709.9px;font-size:25.20px;line-height:33px;color:#2828ff;transform-origin:0 50%;transform:scaleX(0.8873);">18.0543</span>
<span class="t" id="t55" style="left:417.11px;top:709.9px;font-size:25.20px;line-height:33px;color:#2828ff;transform-origin:0 50%;transform:scaleX(0.8873);">18.0766</span>
<svg class="b" style="left:29.0px;top:716.4px;" width="23" height="22" viewBox="0 0 23 22"><path d="M11.500 1.500 L21 11.500 H15.500 V19.500 H7.500 V11.500 H2 Z" fill="#2fc82f" stroke="#0a7a0a" stroke-width="1.800" stroke-linejoin="round"/><path d="M11.500 5 V17" stroke="#8af08a" stroke-width="2.500"/></svg>
<div class="b " style="left:20.5px;top:939.0px;width:484.5px;height:49.0px;background:#f0f0f0;"></div>
<div class="b " style="left:204.0px;top:938.5px;width:301.0px;height:2.0px;background:#000;"></div>
<div class="b " style="left:22.0px;top:938.0px;width:184.0px;height:41.0px;background:#fff;border:2px solid #000;border-top:none;"></div>
<div class="b " style="left:20.5px;top:938.0px;width:3.5px;height:2.2px;background:#000;"></div>
<span class="t" id="t56" style="left:46.80px;top:943.0px;font-size:23.50px;line-height:31px;color:#000;transform-origin:0 50%;transform:scaleX(0.8627);">通貨ペアリスト</span>
<span class="t" id="t57" style="left:224.50px;top:943.0px;font-size:23.50px;line-height:31px;color:#6a6a6a;transform-origin:0 50%;transform:scaleX(0.7523);">ティックチャート</span>
<div class="b " style="left:383.0px;top:946.0px;width:2.0px;height:29.0px;background:#555;"></div>
<div class="b " style="left:12.0px;top:983.0px;width:502.0px;height:2.0px;background:#fcfcfc;"></div>
<div class="b " style="left:514.0px;top:206.0px;width:1394.0px;height:5.0px;background:linear-gradient(180deg,#b8b8b8,#5a5a5a);"></div>
<div class="b " style="left:513.5px;top:209.0px;width:4.1px;height:779.0px;background:linear-gradient(90deg,#c8c8c8,#585858);"></div>
<div class="b " style="left:517.5px;top:210.5px;width:1390.5px;height:777.5px;background:#000;"></div>
<svg class="b" style="left:0;top:0" width="1920" height="1000" viewBox="0 0 1920 1000"><path d="M522.600 988 V216 H1908" fill="none" stroke="#fff" stroke-width="2.200"/><path d="M1317.5 217 V988" stroke="#778899" stroke-width="2.100" stroke-dasharray="6 6.375" stroke-dashoffset="1.83"/><path d="M1251.5 217 V988" stroke="#778899" stroke-width="2.100" stroke-dasharray="6 6.375" stroke-dashoffset="1.83"/><path d="M1185.5 217 V988" stroke="#778899" stroke-width="2.100" stroke-dasharray="6 6.375" stroke-dashoffset="1.83"/><path d="M1119.5 217 V988" stroke="#778899" stroke-width="2.100" stroke-dasharray="6 6.375" stroke-dashoffset="1.83"/><path d="M1053.5 217 V988" stroke="#778899" stroke-width="2.100" stroke-dasharray="6 6.375" stroke-dashoffset="1.83"/><path d="M987.5 217 V988" stroke="#778899" stroke-width="2.100" stroke-dasharray="6 6.375" stroke-dashoffset="1.83"/><path d="M921.5 217 V988" stroke="#778899" stroke-width="2.100" stroke-dasharray="6 6.375" stroke-dashoffset="1.83"/><path d="M855.5 217 V988" stroke="#778899" stroke-width="2.100" stroke-dasharray="6 6.375" stroke-dashoffset="1.83"/><path d="M789.5 217 V988" stroke="#778899" stroke-width="2.100" stroke-dasharray="6 6.375" stroke-dashoffset="1.83"/><path d="M723.5 217 V988" stroke="#778899" stroke-width="2.100" stroke-dasharray="6 6.375" stroke-dashoffset="1.83"/><path d="M657.5 217 V988" stroke="#778899" stroke-width="2.100" stroke-dasharray="6 6.375" stroke-dashoffset="1.83"/><path d="M591.5 217 V988" stroke="#778899" stroke-width="2.100" stroke-dasharray="6 6.375" stroke-dashoffset="1.83"/><path d="M1383.5 217 V988" stroke="#778899" stroke-width="2.100" stroke-dasharray="6 6.375" stroke-dashoffset="1.83"/><path d="M1449.5 217 V988" stroke="#778899" stroke-width="2.100" stroke-dasharray="6 6.375" stroke-dashoffset="1.83"/><path d="M1515.5 217 V988" stroke="#778899" stroke-width="2.100" stroke-dasharray="6 6.375" stroke-dashoffset="1.83"/><path d="M1581.5 217 V988" stroke="#778899" stroke-width="2.100" stroke-dasharray="6 6.375" stroke-dashoffset="1.83"/><path d="M1647.5 217 V988" stroke="#778899" stroke-width="2.100" stroke-dasharray="6 6.375" stroke-dashoffset="1.83"/><path d="M1713.5 217 V988" stroke="#778899" stroke-width="2.100" stroke-dasharray="6 6.375" stroke-dashoffset="1.83"/><path d="M1779.5 217 V988" stroke="#778899" stroke-width="2.100" stroke-dasharray="6 6.375" stroke-dashoffset="1.83"/><path d="M1845.5 217 V988" stroke="#778899" stroke-width="2.100" stroke-dasharray="6 6.375" stroke-dashoffset="1.83"/><path d="M524 274.0 H1908" stroke="#778899" stroke-width="2.100" stroke-dasharray="6 6.375" stroke-dashoffset="9.62"/><path d="M524 342.1 H1908" stroke="#778899" stroke-width="2.100" stroke-dasharray="6 6.375" stroke-dashoffset="9.62"/><path d="M524 410.1 H1908" stroke="#778899" stroke-width="2.100" stroke-dasharray="6 6.375" stroke-dashoffset="9.62"/><path d="M524 478.2 H1908" stroke="#778899" stroke-width="2.100" stroke-dasharray="6 6.375" stroke-dashoffset="9.62"/><path d="M524 546.3 H1908" stroke="#778899" stroke-width="2.100" stroke-dasharray="6 6.375" stroke-dashoffset="9.62"/><path d="M524 614.3 H1908" stroke="#778899" stroke-width="2.100" stroke-dasharray="6 6.375" stroke-dashoffset="9.62"/><path d="M524 682.4 H1908" stroke="#778899" stroke-width="2.100" stroke-dasharray="6 6.375" stroke-dashoffset="9.62"/><path d="M524 750.5 H1908" stroke="#778899" stroke-width="2.100" stroke-dasharray="6 6.375" stroke-dashoffset="9.62"/><path d="M524 818.6 H1908" stroke="#778899" stroke-width="2.100" stroke-dasharray="6 6.375" stroke-dashoffset="9.62"/><path d="M524 886.6 H1908" stroke="#778899" stroke-width="2.100" stroke-dasharray="6 6.375" stroke-dashoffset="9.62"/><path d="M524 954.7 H1908" stroke="#778899" stroke-width="2.100" stroke-dasharray="6 6.375" stroke-dashoffset="9.62"/><path d="M524 880.200 H1908" stroke="#8794a4" stroke-width="2.200"/><path d="M524.6 404.0 V472.5" stroke="#00ff00" stroke-width="2.200"/><path d="M528.9 384.0 V460.0" stroke="#00ff00" stroke-width="2.200"/><path d="M532.9 390.0 V485.0" stroke="#00ff00" stroke-width="2.200"/><path d="M537.3 423.0 V477.0" stroke="#00ff00" stroke-width="2.200"/><path d="M541.3 452.0 V598.0" stroke="#00ff00" stroke-width="2.200"/><path d="M545.3 537.0 V610.0" stroke="#00ff00" stroke-width="2.200"/><path d="M549.4 531.0 V590.0" stroke="#00ff00" stroke-width="2.200"/><path d="M553.7 533.0 V570.0" stroke="#00ff00" stroke-width="2.200"/><path d="M557.7 527.0 V582.0" stroke="#00ff00" stroke-width="2.200"/><path d="M561.8 531.0 V565.5" stroke="#00ff00" stroke-width="2.200"/><path d="M566.0 524.6 V554.7" stroke="#00ff00" stroke-width="2.200"/><path d="M570.0 540.7 V559.0" stroke="#00ff00" stroke-width="2.200"/><path d="M574.0 508.0 V550.6" stroke="#00ff00" stroke-width="2.200"/><path d="M578.0 514.0 V534.5" stroke="#00ff00" stroke-width="2.200"/><path d="M582.5 508.0 V585.7" stroke="#00ff00" stroke-width="2.200"/><path d="M586.5 520.6 V573.0" stroke="#00ff00" stroke-width="2.200"/><path d="M590.6 497.0 V531.0" stroke="#00ff00" stroke-width="2.200"/><path d="M594.6 460.8 V526.0" stroke="#00ff00" stroke-width="2.200"/><path d="M599.0 464.8 V505.7" stroke="#00ff00" stroke-width="2.200"/><path d="M602.7 466.0 V501.0" stroke="#00ff00" stroke-width="2.200"/><path d="M1329.8 958.0 V988.0" stroke="#00ff00" stroke-width="2.200"/><path d="M1333.9 912.0 V988.0" stroke="#00ff00" stroke-width="2.200"/><path d="M1338.0 871.2 V934.0" stroke="#00ff00" stroke-width="2.200"/><path d="M1342.2 854.0 V912.0" stroke="#00ff00" stroke-width="2.200"/><path d="M1346.3 865.2 V904.0" stroke="#00ff00" stroke-width="2.200"/><path d="M1350.4 846.0 V881.2" stroke="#00ff00" stroke-width="2.200"/><path d="M1354.5 830.0 V858.8" stroke="#00ff00" stroke-width="2.200"/><path d="M1358.7 818.8 V857.2" stroke="#00ff00" stroke-width="2.200"/><path d="M1362.8 844.0 V866.0" stroke="#00ff00" stroke-width="2.200"/><path d="M1366.9 813.2 V852.0" stroke="#00ff00" stroke-width="2.200"/><path d="M1371.0 814.0 V852.0" stroke="#00ff00" stroke-width="2.200"/><path d="M1375.2 816.0 V861.2" stroke="#00ff00" stroke-width="2.200"/><path d="M1379.3 811.2 V856.0" stroke="#00ff00" stroke-width="2.200"/><path d="M1383.4 826.0 V864.0" stroke="#00ff00" stroke-width="2.200"/><path d="M1387.5 816.0 V852.0" stroke="#00ff00" stroke-width="2.200"/><path d="M1391.7 802.8 V842.0" stroke="#00ff00" stroke-width="2.200"/><path d="M1395.8 828.0 V852.0" stroke="#00ff00" stroke-width="2.200"/><path d="M1399.9 809.2 V864.0" stroke="#00ff00" stroke-width="2.200"/><path d="M1404.0 756.0 V862.8" stroke="#00ff00" stroke-width="2.200"/><path d="M1408.2 648.0 V770.0" stroke="#00ff00" stroke-width="2.200"/><path d="M1412.3 608.8 V714.0" stroke="#00ff00" stroke-width="2.200"/><path d="M1416.4 646.0 V726.0" stroke="#00ff00" stroke-width="2.200"/><path d="M1420.5 700.0 V768.0" stroke="#00ff00" stroke-width="2.200"/><path d="M1424.7 700.0 V777.2" stroke="#00ff00" stroke-width="2.200"/><path d="M1428.8 700.0 V774.8" stroke="#00ff00" stroke-width="2.200"/><path d="M1432.9 734.8 V798.0" stroke="#00ff00" stroke-width="2.200"/><path d="M1437.0 760.0 V812.0" stroke="#00ff00" stroke-width="2.200"/><path d="M1441.2 765.2 V880.0" stroke="#00ff00" stroke-width="2.200"/><path d="M1445.3 813.2 V878.0" stroke="#00ff00" stroke-width="2.200"/><path d="M1449.4 834.0 V889.2" stroke="#00ff00" stroke-width="2.200"/><path d="M1453.5 868.8 V910.0" stroke="#00ff00" stroke-width="2.200"/><path d="M1457.7 878.8 V912.0" stroke="#00ff00" stroke-width="2.200"/><path d="M1461.8 872.8 V906.0" stroke="#00ff00" stroke-width="2.200"/><path d="M1465.9 852.8 V878.0" stroke="#00ff00" stroke-width="2.200"/><path d="M1470.0 840.0 V865.2" stroke="#00ff00" stroke-width="2.200"/><path d="M1474.2 822.0 V878.8" stroke="#00ff00" stroke-width="2.200"/><path d="M1478.3 804.8 V834.8" stroke="#00ff00" stroke-width="2.200"/><path d="M1482.4 816.0 V840.0" stroke="#00ff00" stroke-width="2.200"/><path d="M1486.5 800.8 V830.0" stroke="#00ff00" stroke-width="2.200"/><path d="M1490.7 804.8 V831.2" stroke="#00ff00" stroke-width="2.200"/><path d="M1494.8 807.2 V850.0" stroke="#00ff00" stroke-width="2.200"/><path d="M1498.9 723.2 V838.0" stroke="#00ff00" stroke-width="2.200"/><path d="M1503.0 720.0 V832.0" stroke="#00ff00" stroke-width="2.200"/><path d="M1507.2 772.0 V830.0" stroke="#00ff00" stroke-width="2.200"/><path d="M1511.3 766.0 V804.8" stroke="#00ff00" stroke-width="2.200"/><path d="M1515.4 770.0 V814.0" stroke="#00ff00" stroke-width="2.200"/><path d="M1519.5 795.2 V868.8" stroke="#00ff00" stroke-width="2.200"/><path d="M1523.7 764.0 V858.0" stroke="#00ff00" stroke-width="2.200"/><path d="M1527.8 732.8 V821.2" stroke="#00ff00" stroke-width="2.200"/><path d="M1531.9 772.0 V880.0" stroke="#00ff00" stroke-width="2.200"/><path d="M1536.0 813.2 V886.8" stroke="#00ff00" stroke-width="2.200"/><path d="M1540.2 832.0 V889.2" stroke="#00ff00" stroke-width="2.200"/><path d="M1544.3 838.0 V896.0" stroke="#00ff00" stroke-width="2.200"/><path d="M1548.4 864.8 V894.0" stroke="#00ff00" stroke-width="2.200"/><path d="M1552.5 846.0 V890.0" stroke="#00ff00" stroke-width="2.200"/><path d="M1556.7 840.0 V858.8" stroke="#00ff00" stroke-width="2.200"/><path d="M1560.8 834.0 V870.8" stroke="#00ff00" stroke-width="2.200"/><path d="M1564.9 826.0 V850.0" stroke="#00ff00" stroke-width="2.200"/><path d="M1569.0 823.2 V837.2" stroke="#00ff00" stroke-width="2.200"/><path d="M1573.2 780.0 V834.8" stroke="#00ff00" stroke-width="2.200"/><path d="M1577.3 780.8 V812.8" stroke="#00ff00" stroke-width="2.200"/><path d="M1581.4 778.0 V810.0" stroke="#00ff00" stroke-width="2.200"/><path d="M1585.5 788.8 V812.0" stroke="#00ff00" stroke-width="2.200"/><path d="M1589.7 792.8 V817.2" stroke="#00ff00" stroke-width="2.200"/><path d="M1593.8 749.2 V802.0" stroke="#00ff00" stroke-width="2.200"/><path d="M1597.9 747.2 V786.0" stroke="#00ff00" stroke-width="2.200"/><path d="M1602.0 754.0 V788.0" stroke="#00ff00" stroke-width="2.200"/><path d="M1606.2 776.0 V815.2" stroke="#00ff00" stroke-width="2.200"/><path d="M1610.3 778.0 V832.0" stroke="#00ff00" stroke-width="2.200"/><path d="M1614.4 804.8 V842.0" stroke="#00ff00" stroke-width="2.200"/><path d="M1618.5 780.0 V834.8" stroke="#00ff00" stroke-width="2.200"/><path d="M1622.7 806.0 V834.8" stroke="#00ff00" stroke-width="2.200"/><path d="M1626.8 786.0 V842.0" stroke="#00ff00" stroke-width="2.200"/><path d="M1630.9 798.8 V952.0" stroke="#00ff00" stroke-width="2.200"/><path d="M1635.0 926.8 V984.0" stroke="#00ff00" stroke-width="2.200"/><path d="M1639.2 960.0 V988.0" stroke="#00ff00" stroke-width="2.200"/><path d="M1643.3 960.0 V986.0" stroke="#00ff00" stroke-width="2.200"/><path d="M1647.4 938.0 V976.0" stroke="#00ff00" stroke-width="2.200"/><path d="M1651.5 929.2 V964.0" stroke="#00ff00" stroke-width="2.200"/><path d="M1655.7 906.0 V970.0" stroke="#00ff00" stroke-width="2.200"/><path d="M1659.8 856.8 V897.2" stroke="#00ff00" stroke-width="2.200"/><path d="M1663.9 824.0 V900.0" stroke="#00ff00" stroke-width="2.200"/><path d="M1668.0 822.0 V860.0" stroke="#00ff00" stroke-width="2.200"/><path d="M1672.2 808.8 V866.8" stroke="#00ff00" stroke-width="2.200"/><path d="M1676.3 807.2 V886.8" stroke="#00ff00" stroke-width="2.200"/><path d="M1206.0 955.0 V988" stroke="#00ff00" stroke-width="2.200"/><path d="M1210.0 968.0 V988" stroke="#00ff00" stroke-width="2.200"/><path d="M1214.0 978.0 V988" stroke="#00ff00" stroke-width="2.200"/><path d="M529.800 229.200 H544.800 L537.300 237.800 Z" fill="#fff"/><text x="554.800" y="239.600" font-family="Liberation Sans,sans-serif" font-size="19.800" fill="#fff" textLength="191" lengthAdjust="spacingAndGlyphs">EURUSD,H1 1.11741</text></svg>
<div class="b " style="left:603.0px;top:216.5px;width:714.0px;height:738.5px;background:#f2f2f2;border:2px solid #a6a6a6;border-radius:6px;"></div>
<div class="b " style="left:1311.0px;top:230.0px;width:4.0px;height:721.0px;background:#f8f8f8;"></div>
<div class="b " style="left:608.0px;top:949.0px;width:707.0px;height:4.0px;background:#f8f8f8;border-radius:0 0 4px 0;"></div>
<div class="b " style="left:612.0px;top:948.2px;width:699.0px;height:1.0px;background:#dcdcdc;"></div>
<span class="t" id="t58" style="left:619.26px;top:231.8px;font-size:22.00px;line-height:29px;color:#1a2028;transform-origin:0 50%;transform:scaleX(0.9396);">EURUSD, Euro vs US Dollar</span>
<div class="b " style="left:1277.0px;top:232.0px;width:37.0px;height:37.0px;background:#cf4a4f;"></div>
<svg class="b" style="left:1290.0px;top:245.4px;" width="12" height="11" viewBox="0 0 12 11"><path d="M1.500 1.300 L10.300 9.700 M10.300 1.300 L1.500 9.700" stroke="#fff" stroke-width="2.300"/></svg>
<div class="b " style="left:606.5px;top:274.5px;width:706.0px;height:635.5px;background:#fff;border:2px solid #b0b0b0;border-bottom:none;"></div>
<div class="b " style="left:608.5px;top:276.5px;width:702.5px;height:633.5px;background:#fff;"></div>
<span class="t" id="t59" style="left:761.00px;top:284.3px;font-size:22.00px;line-height:29px;color:#000;transform-origin:0 50%;transform:scaleX(1.0000);">価格</span>
<div class="b " style="left:608.5px;top:322.2px;width:349.5px;height:37.2px;background:#ffe6ff;"></div>
<div class="b " style="left:608.5px;top:358.2px;width:702.5px;height:2.0px;background:#c0c0c0;"></div>
<div class="b " style="left:957.0px;top:322.2px;width:2.0px;height:37.2px;background:#b8b8b8;"></div>
<span class="t" id="t60" style="left:745.25px;top:328.9px;font-size:19.50px;line-height:25px;color:#111;transform-origin:0 50%;transform:scaleX(1.0475);">1.12456</span>
<div class="b " style="left:961.0px;top:324.6px;width:31.0px;height:31.5px;background:#fff;border:2px solid #c8c8c8;"></div>
<svg class="b" style="left:970.0px;top:334.1px;" width="14" height="10" viewBox="0 0 14 10"><path d="M1.500 1.500 L7 7 L12.500 1.500" fill="none" stroke="#e0323c" stroke-width="2.600"/></svg>
<div class="b " style="left:1278.0px;top:324.6px;width:31.0px;height:31.5px;background:#fff;border:2px solid #c8c8c8;"></div>
<svg class="b" style="left:1286.5px;top:334.6px;" width="14" height="10" viewBox="0 0 14 10"><path d="M1.500 8 L7 2.500 L12.500 8" fill="none" stroke="#3a3ae0" stroke-width="2.600"/></svg>
<div class="b " style="left:608.5px;top:359.4px;width:349.5px;height:37.2px;background:#ffe6ff;"></div>
<div class="b " style="left:608.5px;top:395.4px;width:702.5px;height:2.0px;background:#c0c0c0;"></div>
<div class="b " style="left:957.0px;top:359.4px;width:2.0px;height:37.2px;background:#b8b8b8;"></div>
<span class="t" id="t61" style="left:745.27px;top:366.1px;font-size:19.50px;line-height:25px;color:#111;transform-origin:0 50%;transform:scaleX(1.0324);">1.12455</span>
<div class="b " style="left:961.0px;top:361.8px;width:31.0px;height:31.5px;background:#fff;border:2px solid #c8c8c8;"></div>
<svg class="b" style="left:970.0px;top:371.3px;" width="14" height="10" viewBox="0 0 14 10"><path d="M1.500 1.500 L7 7 L12.500 1.500" fill="none" stroke="#e0323c" stroke-width="2.600"/></svg>
<div class="b " style="left:1278.0px;top:361.8px;width:31.0px;height:31.5px;background:#fff;border:2px solid #c8c8c8;"></div>
<svg class="b" style="left:1286.5px;top:371.8px;" width="14" height="10" viewBox="0 0 14 10"><path d="M1.500 8 L7 2.500 L12.500 8" fill="none" stroke="#3a3ae0" stroke-width="2.600"/></svg>
<div class="b " style="left:608.5px;top:396.6px;width:349.5px;height:37.2px;background:#ffe6ff;"></div>
<div class="b " style="left:608.5px;top:432.6px;width:702.5px;height:2.0px;background:#c0c0c0;"></div>
<div class="b " style="left:957.0px;top:396.6px;width:2.0px;height:37.2px;background:#b8b8b8;"></div>
<span class="t" id="t62" style="left:745.27px;top:403.3px;font-size:19.50px;line-height:25px;color:#111;transform-origin:0 50%;transform:scaleX(1.0324);">1.12454</span>
<div class="b " style="left:961.0px;top:399.0px;width:31.0px;height:31.5px;background:#fff;border:2px solid #c8c8c8;"></div>
<svg class="b" style="left:970.0px;top:408.5px;" width="14" height="10" viewBox="0 0 14 10"><path d="M1.500 1.500 L7 7 L12.500 1.500" fill="none" stroke="#e0323c" stroke-width="2.600"/></svg>
<div class="b " style="left:1278.0px;top:399.0px;width:31.0px;height:31.5px;background:#fff;border:2px solid #c8c8c8;"></div>
<svg class="b" style="left:1286.5px;top:409.0px;" width="14" height="10" viewBox="0 0 14 10"><path d="M1.500 8 L7 2.500 L12.500 8" fill="none" stroke="#3a3ae0" stroke-width="2.600"/></svg>
<div class="b " style="left:608.5px;top:433.8px;width:349.5px;height:37.2px;background:#ffe6ff;"></div>
<div class="b " style="left:608.5px;top:469.8px;width:702.5px;height:2.0px;background:#c0c0c0;"></div>
<div class="b " style="left:957.0px;top:433.8px;width:2.0px;height:37.2px;background:#b8b8b8;"></div>
<span class="t" id="t63" style="left:745.25px;top:440.5px;font-size:19.50px;line-height:25px;color:#111;transform-origin:0 50%;transform:scaleX(1.0475);">1.12453</span>
<div class="b " style="left:961.0px;top:436.2px;width:31.0px;height:31.5px;background:#fff;border:2px solid #c8c8c8;"></div>
<svg class="b" style="left:970.0px;top:445.7px;" width="14" height="10" viewBox="0 0 14 10"><path d="M1.500 1.500 L7 7 L12.500 1.500" fill="none" stroke="#e0323c" stroke-width="2.600"/></svg>
<div class="b " style="left:1278.0px;top:436.2px;width:31.0px;height:31.5px;background:#fff;border:2px solid #c8c8c8;"></div>
<svg class="b" style="left:1286.5px;top:446.2px;" width="14" height="10" viewBox="0 0 14 10"><path d="M1.500 8 L7 2.500 L12.500 8" fill="none" stroke="#3a3ae0" stroke-width="2.600"/></svg>
<div class="b " style="left:608.5px;top:471.0px;width:349.5px;height:37.2px;background:#ffe6ff;"></div>
<div class="b " style="left:608.5px;top:507.0px;width:702.5px;height:2.0px;background:#c0c0c0;"></div>
<div class="b " style="left:957.0px;top:471.0px;width:2.0px;height:37.2px;background:#b8b8b8;"></div>
<span class="t" id="t64" style="left:745.25px;top:477.7px;font-size:19.50px;line-height:25px;color:#111;transform-origin:0 50%;transform:scaleX(1.0475);">1.12452</span>
<div class="b " style="left:961.0px;top:473.4px;width:31.0px;height:31.5px;background:#fff;border:2px solid #c8c8c8;"></div>
<svg class="b" style="left:970.0px;top:482.9px;" width="14" height="10" viewBox="0 0 14 10"><path d="M1.500 1.500 L7 7 L12.500 1.500" fill="none" stroke="#e0323c" stroke-width="2.600"/></svg>
<div class="b " style="left:1278.0px;top:473.4px;width:31.0px;height:31.5px;background:#fff;border:2px solid #c8c8c8;"></div>
<svg class="b" style="left:1286.5px;top:483.4px;" width="14" height="10" viewBox="0 0 14 10"><path d="M1.500 8 L7 2.500 L12.500 8" fill="none" stroke="#3a3ae0" stroke-width="2.600"/></svg>
<div class="b " style="left:608.5px;top:508.2px;width:349.5px;height:37.2px;background:#ffe6ff;"></div>
<div class="b " style="left:608.5px;top:544.2px;width:702.5px;height:2.0px;background:#c0c0c0;"></div>
<div class="b " style="left:957.0px;top:508.2px;width:2.0px;height:37.2px;background:#b8b8b8;"></div>
<span class="t" id="t65" style="left:745.25px;top:514.9px;font-size:19.50px;line-height:25px;color:#111;transform-origin:0 50%;transform:scaleX(1.0475);">1.12451</span>
<div class="b " style="left:961.0px;top:510.6px;width:31.0px;height:31.5px;background:#fff;border:2px solid #c8c8c8;"></div>
<svg class="b" style="left:970.0px;top:520.1px;" width="14" height="10" viewBox="0 0 14 10"><path d="M1.500 1.500 L7 7 L12.500 1.500" fill="none" stroke="#e0323c" stroke-width="2.600"/></svg>
<div class="b " style="left:1278.0px;top:510.6px;width:31.0px;height:31.5px;background:#fff;border:2px solid #c8c8c8;"></div>
<svg class="b" style="left:1286.5px;top:520.6px;" width="14" height="10" viewBox="0 0 14 10"><path d="M1.500 8 L7 2.500 L12.500 8" fill="none" stroke="#3a3ae0" stroke-width="2.600"/></svg>
<div class="b " style="left:608.5px;top:545.4px;width:349.5px;height:37.2px;background:#ffe6ff;"></div>
<div class="b " style="left:608.5px;top:581.4px;width:702.5px;height:2.0px;background:#c0c0c0;"></div>
<div class="b " style="left:957.0px;top:545.4px;width:2.0px;height:37.2px;background:#b8b8b8;"></div>
<span class="t" id="t66" style="left:745.27px;top:552.1px;font-size:19.50px;line-height:25px;color:#111;transform-origin:0 50%;transform:scaleX(1.0324);">1.12450</span>
<div class="b " style="left:961.0px;top:547.8px;width:31.0px;height:31.5px;background:#fff;border:2px solid #c8c8c8;"></div>
<svg class="b" style="left:970.0px;top:557.3px;" width="14" height="10" viewBox="0 0 14 10"><path d="M1.500 1.500 L7 7 L12.500 1.500" fill="none" stroke="#e0323c" stroke-width="2.600"/></svg>
<div class="b " style="left:1278.0px;top:547.8px;width:31.0px;height:31.5px;background:#fff;border:2px solid #c8c8c8;"></div>
<svg class="b" style="left:1286.5px;top:557.8px;" width="14" height="10" viewBox="0 0 14 10"><path d="M1.500 8 L7 2.500 L12.500 8" fill="none" stroke="#3a3ae0" stroke-width="2.600"/></svg>
<div class="b " style="left:608.5px;top:580.8px;width:702.5px;height:2.2px;background:#000;"></div>
<div class="b " style="left:608.5px;top:582.3px;width:349.5px;height:37.2px;background:#d6e4ff;"></div>
<div class="b " style="left:608.5px;top:618.3px;width:702.5px;height:2.0px;background:#c0c0c0;"></div>
<div class="b " style="left:957.0px;top:582.3px;width:2.0px;height:37.2px;background:#b8b8b8;"></div>
<span class="t" id="t67" style="left:745.25px;top:589.0px;font-size:19.50px;line-height:25px;color:#111;transform-origin:0 50%;transform:scaleX(1.0475);">1.12429</span>
<div class="b " style="left:961.0px;top:584.7px;width:31.0px;height:31.5px;background:#fff;border:2px solid #c8c8c8;"></div>
<svg class="b" style="left:970.0px;top:594.2px;" width="14" height="10" viewBox="0 0 14 10"><path d="M1.500 1.500 L7 7 L12.500 1.500" fill="none" stroke="#e0323c" stroke-width="2.600"/></svg>
<div class="b " style="left:1278.0px;top:584.7px;width:31.0px;height:31.5px;background:#fff;border:2px solid #c8c8c8;"></div>
<svg class="b" style="left:1286.5px;top:594.7px;" width="14" height="10" viewBox="0 0 14 10"><path d="M1.500 8 L7 2.500 L12.500 8" fill="none" stroke="#3a3ae0" stroke-width="2.600"/></svg>
<div class="b " style="left:608.5px;top:619.5px;width:349.5px;height:37.2px;background:#d6e4ff;"></div>
<div class="b " style="left:608.5px;top:655.5px;width:702.5px;height:2.0px;background:#c0c0c0;"></div>
<div class="b " style="left:957.0px;top:619.5px;width:2.0px;height:37.2px;background:#b8b8b8;"></div>
<span class="t" id="t68" style="left:745.25px;top:626.2px;font-size:19.50px;line-height:25px;color:#111;transform-origin:0 50%;transform:scaleX(1.0475);">1.12428</span>
<div class="b " style="left:961.0px;top:621.9px;width:31.0px;height:31.5px;background:#fff;border:2px solid #c8c8c8;"></div>
<svg class="b" style="left:970.0px;top:631.4px;" width="14" height="10" viewBox="0 0 14 10"><path d="M1.500 1.500 L7 7 L12.500 1.500" fill="none" stroke="#e0323c" stroke-width="2.600"/></svg>
<div class="b " style="left:1278.0px;top:621.9px;width:31.0px;height:31.5px;background:#fff;border:2px solid #c8c8c8;"></div>
<svg class="b" style="left:1286.5px;top:631.9px;" width="14" height="10" viewBox="0 0 14 10"><path d="M1.500 8 L7 2.500 L12.500 8" fill="none" stroke="#3a3ae0" stroke-width="2.600"/></svg>
<div class="b " style="left:608.5px;top:656.7px;width:349.5px;height:37.2px;background:#d6e4ff;"></div>
<div class="b " style="left:608.5px;top:692.7px;width:702.5px;height:2.0px;background:#c0c0c0;"></div>
<div class="b " style="left:957.0px;top:656.7px;width:2.0px;height:37.2px;background:#b8b8b8;"></div>
<span class="t" id="t69" style="left:745.25px;top:663.4px;font-size:19.50px;line-height:25px;color:#111;transform-origin:0 50%;transform:scaleX(1.0475);">1.12427</span>
<div class="b " style="left:961.0px;top:659.1px;width:31.0px;height:31.5px;background:#fff;border:2px solid #c8c8c8;"></div>
<svg class="b" style="left:970.0px;top:668.6px;" width="14" height="10" viewBox="0 0 14 10"><path d="M1.500 1.500 L7 7 L12.500 1.500" fill="none" stroke="#e0323c" stroke-width="2.600"/></svg>
<div class="b " style="left:1278.0px;top:659.1px;width:31.0px;height:31.5px;background:#fff;border:2px solid #c8c8c8;"></div>
<svg class="b" style="left:1286.5px;top:669.1px;" width="14" height="10" viewBox="0 0 14 10"><path d="M1.500 8 L7 2.500 L12.500 8" fill="none" stroke="#3a3ae0" stroke-width="2.600"/></svg>
<div class="b " style="left:608.5px;top:693.9px;width:349.5px;height:37.2px;background:#d6e4ff;"></div>
<div class="b " style="left:608.5px;top:729.9px;width:702.5px;height:2.0px;background:#c0c0c0;"></div>
<div class="b " style="left:957.0px;top:693.9px;width:2.0px;height:37.2px;background:#b8b8b8;"></div>
<span class="t" id="t70" style="left:745.25px;top:700.6px;font-size:19.50px;line-height:25px;color:#111;transform-origin:0 50%;transform:scaleX(1.0475);">1.12426</span>
<div class="b " style="left:961.0px;top:696.3px;width:31.0px;height:31.5px;background:#fff;border:2px solid #c8c8c8;"></div>
<svg class="b" style="left:970.0px;top:705.8px;" width="14" height="10" viewBox="0 0 14 10"><path d="M1.500 1.500 L7 7 L12.500 1.500" fill="none" stroke="#e0323c" stroke-width="2.600"/></svg>
<div class="b " style="left:1278.0px;top:696.3px;width:31.0px;height:31.5px;background:#fff;border:2px solid #c8c8c8;"></div>
<svg class="b" style="left:1286.5px;top:706.3px;" width="14" height="10" viewBox="0 0 14 10"><path d="M1.500 8 L7 2.500 L12.500 8" fill="none" stroke="#3a3ae0" stroke-width="2.600"/></svg>
<div class="b " style="left:608.5px;top:731.1px;width:349.5px;height:37.2px;background:#d6e4ff;"></div>
<div class="b " style="left:608.5px;top:767.1px;width:702.5px;height:2.0px;background:#c0c0c0;"></div>
<div class="b " style="left:957.0px;top:731.1px;width:2.0px;height:37.2px;background:#b8b8b8;"></div>
<span class="t" id="t71" style="left:745.27px;top:737.8px;font-size:19.50px;line-height:25px;color:#111;transform-origin:0 50%;transform:scaleX(1.0324);">1.12425</span>
<div class="b " style="left:961.0px;top:733.5px;width:31.0px;height:31.5px;background:#fff;border:2px solid #c8c8c8;"></div>
<svg class="b" style="left:970.0px;top:743.0px;" width="14" height="10" viewBox="0 0 14 10"><path d="M1.500 1.500 L7 7 L12.500 1.500" fill="none" stroke="#e0323c" stroke-width="2.600"/></svg>
<div class="b " style="left:1278.0px;top:733.5px;width:31.0px;height:31.5px;background:#fff;border:2px solid #c8c8c8;"></div>
<svg class="b" style="left:1286.5px;top:743.5px;" width="14" height="10" viewBox="0 0 14 10"><path d="M1.500 8 L7 2.500 L12.500 8" fill="none" stroke="#3a3ae0" stroke-width="2.600"/></svg>
<div class="b " style="left:608.5px;top:768.3px;width:349.5px;height:37.2px;background:#d6e4ff;"></div>
<div class="b " style="left:608.5px;top:804.3px;width:702.5px;height:2.0px;background:#c0c0c0;"></div>
<div class="b " style="left:957.0px;top:768.3px;width:2.0px;height:37.2px;background:#b8b8b8;"></div>
<span class="t" id="t72" style="left:745.27px;top:775.0px;font-size:19.50px;line-height:25px;color:#111;transform-origin:0 50%;transform:scaleX(1.0324);">1.12424</span>
<div class="b " style="left:961.0px;top:770.7px;width:31.0px;height:31.5px;background:#fff;border:2px solid #c8c8c8;"></div>
<svg class="b" style="left:970.0px;top:780.2px;" width="14" height="10" viewBox="0 0 14 10"><path d="M1.500 1.500 L7 7 L12.500 1.500" fill="none" stroke="#e0323c" stroke-width="2.600"/></svg>
<div class="b " style="left:1278.0px;top:770.7px;width:31.0px;height:31.5px;background:#fff;border:2px solid #c8c8c8;"></div>
<svg class="b" style="left:1286.5px;top:780.7px;" width="14" height="10" viewBox="0 0 14 10"><path d="M1.500 8 L7 2.500 L12.500 8" fill="none" stroke="#3a3ae0" stroke-width="2.600"/></svg>
<div class="b " style="left:608.5px;top:805.5px;width:349.5px;height:37.2px;background:#d6e4ff;"></div>
<div class="b " style="left:608.5px;top:841.5px;width:702.5px;height:2.0px;background:#c0c0c0;"></div>
<div class="b " style="left:957.0px;top:805.5px;width:2.0px;height:37.2px;background:#b8b8b8;"></div>
<span class="t" id="t73" style="left:745.25px;top:812.2px;font-size:19.50px;line-height:25px;color:#111;transform-origin:0 50%;transform:scaleX(1.0475);">1.12423</span>
<div class="b " style="left:961.0px;top:807.9px;width:31.0px;height:31.5px;background:#fff;border:2px solid #c8c8c8;"></div>
<svg class="b" style="left:970.0px;top:817.4px;" width="14" height="10" viewBox="0 0 14 10"><path d="M1.500 1.500 L7 7 L12.500 1.500" fill="none" stroke="#e0323c" stroke-width="2.600"/></svg>
<div class="b " style="left:1278.0px;top:807.9px;width:31.0px;height:31.5px;background:#fff;border:2px solid #c8c8c8;"></div>
<svg class="b" style="left:1286.5px;top:817.9px;" width="14" height="10" viewBox="0 0 14 10"><path d="M1.500 8 L7 2.500 L12.500 8" fill="none" stroke="#3a3ae0" stroke-width="2.600"/></svg>
<div class="b " style="left:611.0px;top:872.0px;width:229.0px;height:36.5px;background:#f7f7f7;border:1px solid #e0e0e0;"></div>
<div class="b " style="left:646.0px;top:872.0px;width:159.5px;height:36.5px;background:#fff;border:2px solid #5a5a5a;"></div>
<svg class="b" style="left:623.0px;top:886.0px;" width="10" height="6" viewBox="0 0 10 6"><path d="M0 0 H10 L5 6 Z" fill="#222"/></svg>
<svg class="b" style="left:817.5px;top:885.5px;" width="10" height="6" viewBox="0 0 10 6"><path d="M0 6 H10 L5 0 Z" fill="#222"/></svg>
<span class="t" id="t74" style="left:647.50px;top:875.8px;font-size:20.00px;line-height:26px;color:#6c6c6c;transform-origin:0 50%;transform:scaleX(0.8214);">sl</span>
<span class="t" id="t75" style="left:786.50px;top:876.2px;font-size:20.00px;line-height:26px;color:#111;transform-origin:0 50%;transform:scaleX(0.9545);">0</span>
<div class="b " style="left:845.0px;top:872.0px;width:232.0px;height:36.5px;background:#f7f7f7;border:1px solid #e0e0e0;"></div>
<div class="b " style="left:879.0px;top:872.0px;width:163.0px;height:36.5px;background:#fff;border:2px solid #5a5a5a;"></div>
<svg class="b" style="left:857.0px;top:886.0px;" width="10" height="6" viewBox="0 0 10 6"><path d="M0 0 H10 L5 6 Z" fill="#222"/></svg>
<svg class="b" style="left:1054.5px;top:885.5px;" width="10" height="6" viewBox="0 0 10 6"><path d="M0 6 H10 L5 0 Z" fill="#222"/></svg>
<span class="t" id="t76" style="left:880.50px;top:875.8px;font-size:20.00px;line-height:26px;color:#6c6c6c;transform-origin:0 50%;transform:scaleX(0.9752);">vol</span>
<span class="t" id="t77" style="left:993.97px;top:876.2px;font-size:20.00px;line-height:26px;color:#111;transform-origin:0 50%;transform:scaleX(1.0264);">1.00</span>
<div class="b " style="left:1081.0px;top:872.0px;width:229.0px;height:36.5px;background:#f7f7f7;border:1px solid #e0e0e0;"></div>
<div class="b " style="left:1115.8px;top:872.0px;width:159.2px;height:36.5px;background:#fff;border:2px solid #5a5a5a;"></div>
<svg class="b" style="left:1093.0px;top:886.0px;" width="10" height="6" viewBox="0 0 10 6"><path d="M0 0 H10 L5 6 Z" fill="#222"/></svg>
<svg class="b" style="left:1287.5px;top:885.5px;" width="10" height="6" viewBox="0 0 10 6"><path d="M0 6 H10 L5 0 Z" fill="#222"/></svg>
<span class="t" id="t78" style="left:1117.30px;top:875.8px;font-size:20.00px;line-height:26px;color:#6c6c6c;transform-origin:0 50%;transform:scaleX(1.0691);">tp</span>
<span class="t" id="t79" style="left:1256.50px;top:876.2px;font-size:20.00px;line-height:26px;color:#111;transform-origin:0 50%;transform:scaleX(0.9545);">0</span>
<div class="b " style="left:613.5px;top:914.5px;width:224.5px;height:32.5px;background:#ff8080;border:2px solid #e06a6a;border-radius:3px;box-shadow:0 0 0 1.500px #fafafa;"></div>
<div class="b " style="left:845.0px;top:914.5px;width:232.0px;height:32.5px;background:#f2f2f2;border:1px solid #e6e6e6;border-radius:3px;"></div>
<div class="b " style="left:1083.5px;top:914.5px;width:224.5px;height:32.5px;background:#a0c0ff;border:2px solid #86a8ec;border-radius:3px;box-shadow:0 0 0 1.500px #fafafa;"></div>
<span class="t" id="t80" style="left:707.00px;top:917.3px;font-size:21.00px;line-height:27px;color:#111;transform-origin:0 50%;transform:scaleX(0.9079);">売り</span>
<span class="t" id="t81" style="left:938.00px;top:917.3px;font-size:21.00px;line-height:27px;color:#8a8a8a;transform-origin:0 50%;transform:scaleX(1.0476);">決済</span>
<span class="t" id="t82" style="left:1173.99px;top:917.3px;font-size:21.00px;line-height:27px;color:#111;transform-origin:0 50%;transform:scaleX(1.0125);">買い</span>
<div class="b " style="left:935.7px;top:288.0px;width:342.8px;height:156.4px;background:#f0f0f0;border:1px solid #b8b8b8;box-shadow:3.500px 3.500px 3px rgba(0,0,0,.5);"></div>
<div class="b " style="left:985.0px;top:289.0px;width:292.5px;height:154.4px;background:#fff;"></div>
<span class="t" id="t83" style="left:999.00px;top:404.8px;font-size:21.50px;line-height:28px;color:#111;transform-origin:0 50%;transform:scaleX(0.8010);">アラート (I)</span>
<span class="t" id="t84" style="left:1180.08px;top:405.8px;font-size:21.50px;line-height:28px;color:#111;transform-origin:0 50%;transform:scaleX(0.9250);">1.12456</span>
<svg class="b" style="left:944.0px;top:416.0px;" width="36" height="26" viewBox="0 0 36 26"><path d="M3 8 q8 -6 16 -3 l-2 7 q-8 3 -14 -1 Z" fill="#f0c838" stroke="#c89a18" stroke-width="1.500"/><path d="M17 10 h4 v-4.500 h4.500 v4.500 h4.500 v4.500 h-4.500 v4.500 h-4.500 v-4.500 h-4 Z" fill="#2fd42f" stroke="#0a8a0a" stroke-width="1.600"/></svg>
<div class="b " style="left:917.0px;top:275.3px;width:375.7px;height:142.5px;border:20px solid #ffb9b9;border-width:20px 20.200px 20px 20.200px;"></div>
<div class="b " style="left:937.2px;top:295.3px;width:47.8px;height:102.5px;background:#f0f0f0;"></div>
<div class="b " style="left:985.0px;top:295.3px;width:287.6px;height:102.5px;background:#fff;"></div>
<div class="b " style="left:1000.0px;top:344.8px;width:272.6px;height:1.5px;background:#e4e4e4;"></div>
<span class="t" id="t85" style="left:1000.60px;top:302.8px;font-size:21.50px;line-height:28px;color:#111;transform-origin:0 50%;transform:scaleX(0.9480);">指値売り 1.00</span>
<span class="t" id="t86" style="left:1180.08px;top:302.8px;font-size:21.50px;line-height:28px;color:#111;transform-origin:0 50%;transform:scaleX(0.9250);">1.12456</span>
<span class="t" id="t87" style="left:1000.60px;top:362.3px;font-size:21.50px;line-height:28px;color:#111;transform-origin:0 50%;transform:scaleX(0.9829);">逆指値買い 1.00</span>
<span class="t" id="t88" style="left:1180.08px;top:362.3px;font-size:21.50px;line-height:28px;color:#111;transform-origin:0 50%;transform:scaleX(0.9250);">1.12456</span>
<svg class="b" style="left:948.0px;top:303.0px;" width="30" height="26" viewBox="0 0 30 26"><path d="M2 3.500 H28" stroke="#333" stroke-width="1.600"/><path d="M10.500 7 h9 v8 h6 l-10.500 9.500 -10.500 -9.500 h6 Z" fill="#e8381a"/></svg>
<svg class="b" style="left:948.0px;top:363.0px;" width="30" height="26" viewBox="0 0 30 26"><path d="M2 23 H28" stroke="#333" stroke-width="1.600"/><path d="M10.500 19.500 h9 v-8 h6 l-10.500 -9.500 -10.500 9.500 h6 Z" fill="#2a84e0"/></svg>
</body></html>
